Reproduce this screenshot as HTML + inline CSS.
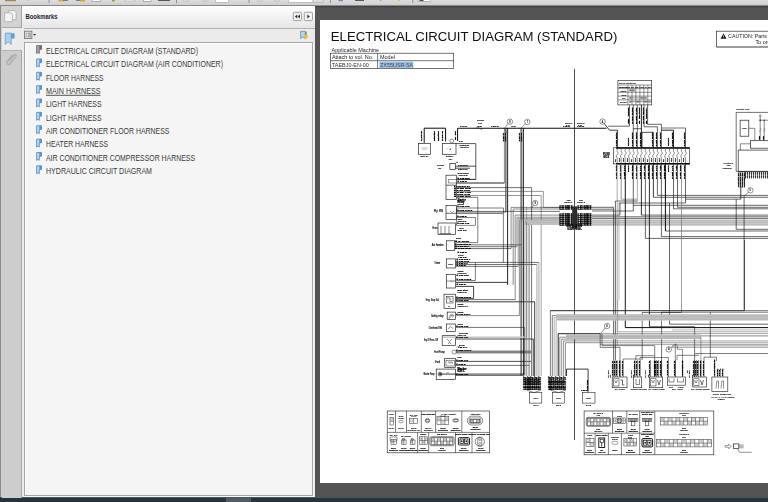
<!DOCTYPE html>
<html><head><meta charset="utf-8"><title>Electrical Circuit Diagram</title>
<style>
html,body{margin:0;padding:0;}
body{width:768px;height:502px;overflow:hidden;position:relative;background:#545454;font-family:"Liberation Sans",sans-serif;}
#tb{position:absolute;left:0;top:0;width:768px;height:5px;background:linear-gradient(#dcdcdc,#cfcfcf);border-bottom:1px solid #8a8a8a;}
#shade{position:absolute;left:315px;top:6px;width:453px;height:2px;background:linear-gradient(#3c3c3c,#545454);}
#strip{position:absolute;left:0;top:6px;width:22px;height:491px;background:#cdcdcd;border-left:1.3px solid #8c8c8c;box-sizing:border-box;}
#tab1{position:absolute;left:2px;top:6px;width:19px;height:21px;background:#d3d3d3;border-right:1px solid #a3a3a3;border-bottom:1px solid #a8a8a8;}
#tab2{position:absolute;left:2px;top:28px;width:22px;height:22px;background:#ebebeb;}
#tab3{position:absolute;left:2px;top:50px;width:19px;height:447px;background:#cdcdcd;border-right:1px solid #a6a6a6;border-top:1px solid #b3b3b3}
#panel{position:absolute;left:22px;top:6px;width:292.7px;height:491px;background:#ebebeb;}
#hdr{position:absolute;left:0;top:0;width:292.7px;height:21.6px;background:linear-gradient(#ffffff,#f6f6f6 40%,#e5e5e5);border-bottom:1px solid #b2b2b2;}
#list{position:absolute;left:2.2px;top:36.3px;width:287px;height:452px;background:#f5f5f5;border:1px solid #a5a5a5;box-shadow:inset 1px 1px 0 #fdfdfd, 1px 1px 0 #fafafa;}
#page{position:absolute;left:319.8px;top:20.3px;width:449px;height:463px;background:#fff;}
#bot{position:absolute;left:0;top:497.5px;width:768px;height:5px;background:#22353f;}
#bot i{position:absolute;left:226px;top:0.5px;width:25px;height:5px;background:#4a5e69;}
svg#dg{position:absolute;left:0;top:0;will-change:transform;}
</style></head><body>
<div id="tb"></div><div id="shade"></div>
<div id="strip"></div><div id="tab1"></div><div id="tab3"></div>
<div id="panel"><div id="hdr"></div><div id="list"></div></div><div id="tab2"></div>
<div id="page"></div>
<div id="bot"><i></i></div>
<svg width="768" height="502" style="position:absolute;left:0;top:0" font-family="Liberation Sans, sans-serif">
<!-- toolbar remnants -->
<rect x="5" y="0" width="11" height="1.2" fill="#a58645"/><rect x="27.5" y="0" width="1" height="0.8" fill="#8aa0c0"/>
<rect x="48.6" y="0" width="1" height="3" fill="#8f8f8f"/><rect x="176" y="0" width="1" height="3" fill="#8f8f8f"/><rect x="248.6" y="0" width="1" height="3" fill="#8f8f8f"/><rect x="330" y="0" width="1" height="3" fill="#8f8f8f"/><rect x="412.3" y="0" width="1" height="3" fill="#8f8f8f"/>
<rect x="58.5" y="0" width="6" height="1.4" fill="#dba436"/><rect x="63" y="0" width="5" height="1" fill="#7d7d7d"/>
<rect x="76" y="0" width="6" height="1" fill="#7d7d7d"/><rect x="80" y="0" width="5" height="1.5" fill="#dba436"/>
<rect x="92" y="-1" width="8.5" height="2.4" fill="#fff" stroke="#888" stroke-width="0.6"/>
<rect x="112" y="0" width="2.6" height="1.4" fill="#6ab132"/>
<rect x="125" y="-1" width="10" height="2" fill="#f6f6f6" stroke="#999" stroke-width="0.5"/><rect x="143.5" y="-1" width="7.5" height="2.4" fill="#fff" stroke="#888" stroke-width="0.6"/>
<rect x="158" y="0" width="12" height="1" fill="#555"/>
<circle cx="186" cy="-1.5" r="3.2" fill="none" stroke="#bbb" stroke-width="0.7"/><circle cx="205.5" cy="-1.5" r="3.2" fill="none" stroke="#bbb" stroke-width="0.7"/>
<rect x="215.5" y="-1" width="13" height="3.4" fill="#fff" stroke="#aaa" stroke-width="0.6"/>
<circle cx="260" cy="-1.5" r="3.2" fill="none" stroke="#bbb" stroke-width="0.7"/><circle cx="277" cy="-1.5" r="3.2" fill="none" stroke="#bbb" stroke-width="0.7"/>
<rect x="288.5" y="-1" width="24.5" height="3.4" fill="#fff" stroke="#aaa" stroke-width="0.6"/><rect x="313" y="-1" width="10.5" height="3.4" fill="#ddd" stroke="#aaa" stroke-width="0.6"/>
<rect x="338.5" y="0" width="4.5" height="1.2" fill="#6d8fc0"/><rect x="355" y="0" width="9" height="1" fill="#555"/>
<circle cx="380.5" cy="0" r="1" fill="#9a9a9a"/><circle cx="399" cy="0" r="1.1" fill="#d8c840"/>
<rect x="418" y="-1" width="12.5" height="2.6" fill="#fff" stroke="#888" stroke-width="0.6"/><rect x="419.5" y="0" width="4" height="1" fill="#444"/>
<!-- pages icon -->
<g fill="#f4f4f4" stroke="#a9a9a9" stroke-width="0.8"><path d="M8.3 10.6h6.2l1.6 1.6v7.4h-7.8z"/><path d="M4.6 12.8h6.3l1.5 1.5v7.4h-7.8z"/></g>
<!-- bookmark tab icon -->
<path d="M5.2 33.1h6v11.2l-3-2.5l-3 2.5z" fill="#a9d1ee" stroke="#6a9fcd" stroke-width="0.8"/><rect x="11.2" y="33.3" width="3.3" height="5.2" fill="#5d9bcf"/>
<!-- paperclip -->
<g transform="rotate(40 10.5 60)" fill="none" stroke="#adadad" stroke-width="1.3"><path d="M8.7 55v8.2a1.9 1.9 0 0 0 3.8 0v-9.4a1.2 1.2 0 0 0-2.4 0v8.6"/></g>
<!-- options icon -->
<rect x="24.4" y="31.2" width="7.5" height="7.4" fill="#ededed" stroke="#6d6d6d" stroke-width="0.8"/><path d="M25.6 33.2h1.2M27.6 33.2h3.4M25.6 35h1.2M27.6 35h3.4M25.6 36.8h1.2M27.6 36.8h3.4" stroke="#555" stroke-width="0.7"/><path d="M33 34h3.2l-1.6 1.7z" fill="#333"/>
<!-- new bookmark icon -->
<path d="M300.6 31.4h4.6v7.2l-2.3-1.6l-2.3 1.6z" fill="#b7d6ee" stroke="#5d8fc0" stroke-width="0.8"/><rect x="305" y="31.6" width="1.8" height="3.4" fill="#5d9bcf"/><circle cx="305.6" cy="36.6" r="2.2" fill="#f0b93a"/>
<!-- header buttons -->
<rect x="293.3" y="12.3" width="8.3" height="8.3" rx="1" fill="#f2f2f2" stroke="#8d8d8d" stroke-width="0.8"/><path d="M297.3 14.6v3.8l-2.4-1.9zM300 14.6v3.8l-2.4-1.9z" fill="#333"/>
<rect x="304.3" y="12.3" width="8.2" height="8.3" rx="1" fill="#f2f2f2" stroke="#8d8d8d" stroke-width="0.8"/><path d="M307.3 14.5v4l2.6-2z" fill="#333"/>
<text x="25.5" y="18.6" font-size="8" font-weight="bold" fill="#1b1f36" textLength="32" lengthAdjust="spacingAndGlyphs">Bookmarks</text>
<g transform="translate(36.1,45.10)"><path d="M0.5 0.5h4.9v3.7h-2.2v4.2l-1.3-1.1l-1.4 1.1z" fill="#a9a9a9" stroke="#6e6e6e" stroke-width="0.9"/><rect x="3.2" y="0.4" width="2.4" height="3.9" fill="#6e6e6e"/></g><text x="46" y="53.80" font-size="8.7" fill="#3a3a3a" textLength="152" lengthAdjust="spacingAndGlyphs">ELECTRICAL CIRCUIT DIAGRAM (STANDARD)</text>
<g transform="translate(36.1,58.46)"><path d="M0.5 0.5h4.9v3.7h-2.2v4.2l-1.3-1.1l-1.4 1.1z" fill="#bcd8ee" stroke="#5a92c6" stroke-width="0.9"/><rect x="3.2" y="0.4" width="2.4" height="3.9" fill="#5a92c6"/></g><text x="46" y="67.16" font-size="8.7" fill="#3a3a3a" textLength="177" lengthAdjust="spacingAndGlyphs">ELECTRICAL CIRCUIT DIAGRAM (AIR CONDITIONER)</text>
<g transform="translate(36.1,71.82)"><path d="M0.5 0.5h4.9v3.7h-2.2v4.2l-1.3-1.1l-1.4 1.1z" fill="#bcd8ee" stroke="#5a92c6" stroke-width="0.9"/><rect x="3.2" y="0.4" width="2.4" height="3.9" fill="#5a92c6"/></g><text x="46" y="80.52" font-size="8.7" fill="#3a3a3a" textLength="57.5" lengthAdjust="spacingAndGlyphs">FLOOR HARNESS</text>
<g transform="translate(36.1,85.18)"><path d="M0.5 0.5h4.9v3.7h-2.2v4.2l-1.3-1.1l-1.4 1.1z" fill="#bcd8ee" stroke="#5a92c6" stroke-width="0.9"/><rect x="3.2" y="0.4" width="2.4" height="3.9" fill="#5a92c6"/></g><text x="46" y="93.88" font-size="8.7" fill="#3a3a3a" textLength="54.5" lengthAdjust="spacingAndGlyphs">MAIN HARNESS</text><path d="M46 95.3H100.5" stroke="#2b2b2b" stroke-width="0.8"/>
<g transform="translate(36.1,98.54)"><path d="M0.5 0.5h4.9v3.7h-2.2v4.2l-1.3-1.1l-1.4 1.1z" fill="#bcd8ee" stroke="#5a92c6" stroke-width="0.9"/><rect x="3.2" y="0.4" width="2.4" height="3.9" fill="#5a92c6"/></g><text x="46" y="107.24" font-size="8.7" fill="#3a3a3a" textLength="55.5" lengthAdjust="spacingAndGlyphs">LIGHT HARNESS</text>
<g transform="translate(36.1,111.90)"><path d="M0.5 0.5h4.9v3.7h-2.2v4.2l-1.3-1.1l-1.4 1.1z" fill="#bcd8ee" stroke="#5a92c6" stroke-width="0.9"/><rect x="3.2" y="0.4" width="2.4" height="3.9" fill="#5a92c6"/></g><text x="46" y="120.60" font-size="8.7" fill="#3a3a3a" textLength="55.5" lengthAdjust="spacingAndGlyphs">LIGHT HARNESS</text>
<g transform="translate(36.1,125.26)"><path d="M0.5 0.5h4.9v3.7h-2.2v4.2l-1.3-1.1l-1.4 1.1z" fill="#bcd8ee" stroke="#5a92c6" stroke-width="0.9"/><rect x="3.2" y="0.4" width="2.4" height="3.9" fill="#5a92c6"/></g><text x="46" y="133.96" font-size="8.7" fill="#3a3a3a" textLength="123.5" lengthAdjust="spacingAndGlyphs">AIR CONDITIONER FLOOR HARNESS</text>
<g transform="translate(36.1,138.62)"><path d="M0.5 0.5h4.9v3.7h-2.2v4.2l-1.3-1.1l-1.4 1.1z" fill="#bcd8ee" stroke="#5a92c6" stroke-width="0.9"/><rect x="3.2" y="0.4" width="2.4" height="3.9" fill="#5a92c6"/></g><text x="46" y="147.32" font-size="8.7" fill="#3a3a3a" textLength="62" lengthAdjust="spacingAndGlyphs">HEATER HARNESS</text>
<g transform="translate(36.1,151.98)"><path d="M0.5 0.5h4.9v3.7h-2.2v4.2l-1.3-1.1l-1.4 1.1z" fill="#bcd8ee" stroke="#5a92c6" stroke-width="0.9"/><rect x="3.2" y="0.4" width="2.4" height="3.9" fill="#5a92c6"/></g><text x="46" y="160.68" font-size="8.7" fill="#3a3a3a" textLength="149" lengthAdjust="spacingAndGlyphs">AIR CONDITIONER COMPRESSOR HARNESS</text>
<g transform="translate(36.1,165.34)"><path d="M0.5 0.5h4.9v3.7h-2.2v4.2l-1.3-1.1l-1.4 1.1z" fill="#bcd8ee" stroke="#5a92c6" stroke-width="0.9"/><rect x="3.2" y="0.4" width="2.4" height="3.9" fill="#5a92c6"/></g><text x="46" y="174.04" font-size="8.7" fill="#3a3a3a" textLength="106" lengthAdjust="spacingAndGlyphs">HYDRAULIC CIRCUIT DIAGRAM</text>
</svg>
<svg id="dg" width="768" height="502" viewBox="0 0 768 502" font-family="Liberation Sans, sans-serif" fill="none">
<text x="330.8" y="41.3" font-size="12.85" fill="#111" textLength="286.5" lengthAdjust="spacingAndGlyphs">ELECTRICAL CIRCUIT DIAGRAM (STANDARD)</text>
<text x="331.5" y="51.9" font-size="5.9" fill="#2a2233" textLength="47.5" lengthAdjust="spacingAndGlyphs">Applicable Machine</text>
<rect x="330.4" y="53.2" width="123.3" height="15.3" stroke="#222" stroke-width="0.62" fill="none"/>
<path d="M330.4 60.7H453.7" stroke="#222" stroke-width="0.62"/>
<path d="M377.6 53.2V68.5" stroke="#222" stroke-width="0.62"/>
<text x="331.9" y="58.8" font-size="5.6" fill="#222" textLength="41.4" lengthAdjust="spacingAndGlyphs">Attach to vol. No.</text>
<text x="380.0" y="58.8" font-size="5.6" fill="#222" textLength="14.9" lengthAdjust="spacingAndGlyphs">Model</text>
<text x="331.9" y="66.7" font-size="5.6" fill="#333" textLength="36.8" lengthAdjust="spacingAndGlyphs">TAEBJ0-EN-00</text>
<rect x="379.4" y="61.4" width="34" height="6.6" fill="#9fc0e2"/>
<text x="380.0" y="66.7" font-size="5.6" fill="#3a4656" textLength="33" lengthAdjust="spacingAndGlyphs">ZX55USR-5A</text>
<rect x="717.2" y="32" width="60" height="15.6" fill="#9a9a9a"/>
<rect x="716.5" y="31.2" width="73.5" height="15.7" stroke="#333" stroke-width="0.72" fill="#fff"/>
<path d="M723.5 33.6L726.5 38.8H720.5Z" fill="#111"/>
<path d="M723.5 35.2V37.2M723.5 37.7V38.3" stroke="#fff" stroke-width="0.6"/>
<text x="728.1" y="37.9" font-size="6.2" fill="#222" textLength="38.9" lengthAdjust="spacingAndGlyphs">CAUTION: Parts</text>
<text x="755.4" y="44.1" font-size="6.2" fill="#222" textLength="19.9" lengthAdjust="spacingAndGlyphs">To order</text>
<path d="M458.0 128.2H606.5" stroke="#0a0a0a" stroke-width="1.1"/>
<path d="M424.2 142.8L424.2 128.2L445.6 128.2L445.6 141.5" stroke="#0a0a0a" stroke-width="1.0" fill="none"/>
<path d="M457.6 128.2V141.0" stroke="#0a0a0a" stroke-width="1.0"/>
<rect x="418.4" y="143.5" width="11.9" height="10.8" stroke="#1c1c1c" stroke-width="0.67" fill="none"/>
<rect x="442.3" y="143.5" width="13.7" height="10.8" stroke="#1c1c1c" stroke-width="0.67" fill="none"/>
<circle cx="451.8" cy="141.0" r="1.9" stroke="#262626" stroke-width="0.5" fill="none"/>
<path d="M456.0 143.6L475.8 143.6L475.8 179.4" stroke="#0a0a0a" stroke-width="0.67" fill="none"/>
<path d="M456.5 179.4H475.8" stroke="#0a0a0a" stroke-width="0.9"/>
<rect x="449.8" y="163.5" width="5.5" height="5.9" stroke="#1c1c1c" stroke-width="0.67" fill="none"/>
<path d="M455.3 166.2H475.8" stroke="#0a0a0a" stroke-width="0.72"/>
<path d="M455.3 168.2H470.0" stroke="#0a0a0a" stroke-width="0.72"/>
<path d="M421.0 148.0H428.0" stroke="#8c8c8c" stroke-width="0.47000000000000003"/>
<path d="M422.5 149.3H426.5" stroke="#8c8c8c" stroke-width="0.47000000000000003"/>
<text x="446.5" y="149.5" font-size="3.2" fill="#333" stroke="#333" stroke-width="0.14">−  +</text>
<text x="420.5" y="157.3" font-size="2.3" fill="#222" stroke="#222" stroke-width="0.14">Batt. Ry</text>
<text x="446.0" y="157.3" font-size="2.3" fill="#222" stroke="#222" stroke-width="0.14">Battery</text>
<text x="448.5" y="159.8" font-size="2.3" fill="#222" stroke="#222" stroke-width="0.14">12V</text>
<text x="437.0" y="166.3" font-size="2.2" fill="#222" stroke="#222" stroke-width="0.14">Fusible</text>
<text x="438.0" y="168.6" font-size="2.2" fill="#222" stroke="#222" stroke-width="0.14">link</text>
<text x="422.4" y="141.0" font-size="2.1" fill="#000" stroke="#000" stroke-width="0.22" font-weight="bold" transform="rotate(-90 422.4 141.0)" textLength="10" lengthAdjust="spacingAndGlyphs">1.25 B</text>
<text x="435.2" y="141.0" font-size="2.1" fill="#000" stroke="#000" stroke-width="0.22" font-weight="bold" transform="rotate(-90 435.2 141.0)" textLength="10" lengthAdjust="spacingAndGlyphs">Starter</text>
<text x="439.2" y="141.0" font-size="2.1" fill="#000" stroke="#000" stroke-width="0.22" font-weight="bold" transform="rotate(-90 439.2 141.0)" textLength="10" lengthAdjust="spacingAndGlyphs">Motor</text>
<text x="443.4" y="141.0" font-size="2.1" fill="#000" stroke="#000" stroke-width="0.22" font-weight="bold" transform="rotate(-90 443.4 141.0)" textLength="10" lengthAdjust="spacingAndGlyphs">1.25 R</text>
<text x="455.9" y="140.0" font-size="2.1" fill="#000" stroke="#000" stroke-width="0.22" font-weight="bold" transform="rotate(-90 455.9 140.0)" textLength="9" lengthAdjust="spacingAndGlyphs">5 R</text>
<text x="460.0" y="127.2" font-size="2.5" fill="#222" stroke="#222" stroke-width="0.22" font-weight="bold">5 W/R</text>
<text x="477.5" y="127.2" font-size="2.5" fill="#222" stroke="#222" stroke-width="0.22" font-weight="bold">5 W</text>
<text x="491.0" y="127.2" font-size="2.5" fill="#222" stroke="#222" stroke-width="0.22" font-weight="bold">1.25 W</text>
<text x="511.5" y="127.2" font-size="2.5" fill="#222" stroke="#222" stroke-width="0.22" font-weight="bold">5 W</text>
<text x="477.0" y="121.2" font-size="2.2" fill="#222" stroke="#222" stroke-width="0.14">Fusible</text>
<text x="478.0" y="123.5" font-size="2.2" fill="#222" stroke="#222" stroke-width="0.14">Link</text>
<path d="M476.0 128.2L478.0 126.6L481.0 129.6L483.0 128.2" stroke="#0a0a0a" stroke-width="0.5" fill="none"/>
<text x="459.0" y="142.3" font-size="2.4" fill="#222" stroke="#222" stroke-width="0.22" font-weight="bold">5 R</text>
<text x="459.5" y="145.8" font-size="2.3" fill="#222" stroke="#222" stroke-width="0.22" font-weight="bold">1.25 B/W</text>
<text x="459.5" y="147.8" font-size="2.2" fill="#222" stroke="#222" stroke-width="0.14">Alternator</text>
<text x="458.0" y="166.0" font-size="2.3" fill="#222" stroke="#222" stroke-width="0.22" font-weight="bold">1.25 W/R</text>
<text x="458.0" y="169.9" font-size="2.3" fill="#222" stroke="#222" stroke-width="0.22" font-weight="bold">0.85 L/W</text>
<text x="456.5" y="163.0" font-size="2.2" fill="#222" stroke="#222" stroke-width="0.14">■</text>
<circle cx="510.0" cy="121.7" r="2.7" stroke="#262626" stroke-width="0.5" fill="#fff"/>
<text x="510.0" y="122.7" font-size="2.8" fill="#222" stroke="#222" stroke-width="0.14" text-anchor="middle">8</text>
<circle cx="527.3" cy="122.0" r="2.7" stroke="#262626" stroke-width="0.5" fill="#fff"/>
<text x="527.3" y="123.0" font-size="2.8" fill="#222" stroke="#222" stroke-width="0.14" text-anchor="middle">7</text>
<path d="M508.0 123.6L504.6 128.2" stroke="#262626" stroke-width="0.5" fill="none"/>
<path d="M525.3 123.9L521.0 128.2" stroke="#262626" stroke-width="0.5" fill="none"/>
<path d="M504.4 128.2V182.8" stroke="#1c1c1c" stroke-width="0.52"/>
<path d="M505.9 128.2V212.0" stroke="#0a0a0a" stroke-width="0.85"/>
<path d="M507.6 128.2V285.0" stroke="#0a0a0a" stroke-width="0.9"/>
<path d="M503.8 128.2L507.4 133.2" stroke="#262626" stroke-width="0.4" fill="none"/>
<path d="M521.1 128.2V375.5" stroke="#0a0a0a" stroke-width="0.9"/>
<path d="M522.3 128.2V300.0" stroke="#888" stroke-width="0.47000000000000003"/>
<path d="M523.4 128.2V375.5" stroke="#0a0a0a" stroke-width="0.9"/>
<text x="503.8" y="141.5" font-size="2.1" fill="#000" stroke="#000" stroke-width="0.22" font-weight="bold" transform="rotate(-90 503.8 141.5)" textLength="8.5" lengthAdjust="spacingAndGlyphs">1.25 W</text>
<text x="505.9" y="141.5" font-size="2.1" fill="#000" stroke="#000" stroke-width="0.22" font-weight="bold" transform="rotate(-90 505.9 141.5)" textLength="8.5" lengthAdjust="spacingAndGlyphs">1.25 W</text>
<text x="520.1" y="141.5" font-size="2.1" fill="#000" stroke="#000" stroke-width="0.22" font-weight="bold" transform="rotate(-90 520.1 141.5)" textLength="8.5" lengthAdjust="spacingAndGlyphs">1.25 W</text>
<text x="522.4" y="141.5" font-size="2.1" fill="#000" stroke="#000" stroke-width="0.22" font-weight="bold" transform="rotate(-90 522.4 141.5)" textLength="8.5" lengthAdjust="spacingAndGlyphs">1.25 W</text>
<path d="M574.5 68.7V440.0" stroke="#0a0a0a" stroke-width="0.72"/>
<text x="565.0" y="123.5" font-size="2.2" fill="#222" stroke="#222" stroke-width="0.14">Relay-1</text>
<text x="566.0" y="125.8" font-size="2.2" fill="#222" stroke="#222" stroke-width="0.14">5 W</text>
<text x="577.0" y="123.5" font-size="2.2" fill="#222" stroke="#222" stroke-width="0.14">Relay-2</text>
<text x="578.0" y="125.8" font-size="2.2" fill="#222" stroke="#222" stroke-width="0.14">5 W</text>
<text x="563.0" y="127.3" font-size="2.3" fill="#222" stroke="#222" stroke-width="0.22" font-weight="bold">1.25 W</text>
<text x="577.0" y="127.3" font-size="2.3" fill="#222" stroke="#222" stroke-width="0.22" font-weight="bold">1.25 W</text>
<rect x="617.9" y="80.4" width="33.8" height="24.5" stroke="#1c1c1c" stroke-width="0.62" fill="#fff"/>
<path d="M617.9 85.0H651.7" stroke="#1c1c1c" stroke-width="0.47000000000000003"/>
<path d="M617.9 88.6H651.7" stroke="#1c1c1c" stroke-width="0.47000000000000003"/>
<path d="M617.9 92.3H651.7" stroke="#1c1c1c" stroke-width="0.47000000000000003"/>
<path d="M617.9 96.1H651.7" stroke="#1c1c1c" stroke-width="0.47000000000000003"/>
<path d="M617.9 99.9H651.7" stroke="#1c1c1c" stroke-width="0.47000000000000003"/>
<path d="M627.9 85.0V104.9" stroke="#1c1c1c" stroke-width="0.47000000000000003"/>
<path d="M632.0 85.0V104.9" stroke="#1c1c1c" stroke-width="0.47000000000000003"/>
<path d="M635.9 85.0V104.9" stroke="#1c1c1c" stroke-width="0.47000000000000003"/>
<path d="M639.9 85.0V104.9" stroke="#1c1c1c" stroke-width="0.47000000000000003"/>
<path d="M643.9 85.0V104.9" stroke="#1c1c1c" stroke-width="0.47000000000000003"/>
<path d="M647.8 85.0V104.9" stroke="#1c1c1c" stroke-width="0.47000000000000003"/>
<text x="619.0" y="84.0" font-size="2.3" fill="#222" stroke="#222" stroke-width="0.14" textLength="17" lengthAdjust="spacingAndGlyphs">Key SW (Starter SW)</text>
<text x="618.6" y="88.0" font-size="2.3" fill="#222" stroke="#222" stroke-width="0.22" font-weight="bold">Terminal</text>
<text x="628.3" y="88.0" font-size="2.2" fill="#222" stroke="#222" stroke-width="0.14" textLength="23" lengthAdjust="spacingAndGlyphs">B G1 G2 ACC M ST</text>
<text x="620.5" y="91.7" font-size="2.3" fill="#222" stroke="#222" stroke-width="0.14">HEAT</text>
<text x="621.5" y="95.5" font-size="2.3" fill="#222" stroke="#222" stroke-width="0.14">OFF</text>
<text x="622.0" y="99.3" font-size="2.3" fill="#222" stroke="#222" stroke-width="0.14">ON</text>
<text x="619.8" y="103.2" font-size="2.3" fill="#222" stroke="#222" stroke-width="0.14">START</text>
<circle cx="630.0" cy="90.4" r="0.9" stroke="#262626" stroke-width="0.4" fill="none"/>
<circle cx="634.0" cy="90.4" r="0.9" stroke="#262626" stroke-width="0.4" fill="none"/>
<path d="M630.0 90.4H634.0" stroke="#1c1c1c" stroke-width="0.47000000000000003"/>
<circle cx="630.0" cy="97.9" r="0.9" stroke="#262626" stroke-width="0.4" fill="none"/>
<circle cx="641.9" cy="97.9" r="0.9" stroke="#262626" stroke-width="0.4" fill="none"/>
<circle cx="645.8" cy="97.9" r="0.9" stroke="#262626" stroke-width="0.4" fill="none"/>
<path d="M630.0 97.9H645.8" stroke="#1c1c1c" stroke-width="0.47000000000000003"/>
<circle cx="630.0" cy="101.7" r="0.9" stroke="#262626" stroke-width="0.4" fill="none"/>
<circle cx="637.9" cy="101.7" r="0.9" stroke="#262626" stroke-width="0.4" fill="none"/>
<circle cx="645.8" cy="101.7" r="0.9" stroke="#262626" stroke-width="0.4" fill="none"/>
<circle cx="649.8" cy="101.7" r="0.9" stroke="#262626" stroke-width="0.4" fill="none"/>
<path d="M630.0 101.7H649.8" stroke="#1c1c1c" stroke-width="0.47000000000000003"/>
<circle cx="602.5" cy="121.5" r="2.7" stroke="#262626" stroke-width="0.5" fill="#fff"/>
<text x="602.5" y="122.5" font-size="2.8" fill="#222" stroke="#222" stroke-width="0.14" text-anchor="middle">4</text>
<path d="M604.3 123.6L609.5 130.2L617.4 130.2L617.4 147.8" stroke="#0a0a0a" stroke-width="0.8" fill="none"/>
<path d="M629.5 104.9L629.5 126.2L608.2 126.2" stroke="#0a0a0a" stroke-width="0.62" fill="none"/>
<path d="M633.3 104.9L633.3 147.8" stroke="#0a0a0a" stroke-width="0.62" fill="none"/>
<path d="M637.3 104.9L637.3 147.8" stroke="#0a0a0a" stroke-width="0.62" fill="none"/>
<path d="M641.4 104.9V147.8" stroke="#0a0a0a" stroke-width="0.9"/>
<path d="M644.0 104.9L644.0 126.8L657.4 126.8L657.4 147.8" stroke="#0a0a0a" stroke-width="0.62" fill="none"/>
<path d="M647.6 104.9L647.6 124.3L661.4 124.3L661.4 147.8" stroke="#0a0a0a" stroke-width="0.62" fill="none"/>
<path d="M633.2 128.7L641.4 128.7" stroke="#0a0a0a" stroke-width="0.62" fill="none"/>
<path d="M642.0 147.8L642.0 132.3L653.4 132.3L653.4 147.8" stroke="#0a0a0a" stroke-width="0.72" fill="none"/>
<path d="M661.4 128.0L685.5 128.0" stroke="#1c1c1c" stroke-width="0.62" fill="none"/>
<path d="M661.4 130.2L673.5 130.2L673.5 147.8" stroke="#0a0a0a" stroke-width="0.9" fill="none"/>
<path d="M685.5 128.0L685.5 147.8" stroke="#0a0a0a" stroke-width="0.62" fill="none"/>
<text x="629.2" y="124.0" font-size="2.1" fill="#000" stroke="#000" stroke-width="0.22" font-weight="bold" transform="rotate(-90 629.2 124.0)" textLength="16.5" lengthAdjust="spacingAndGlyphs">3 W</text>
<text x="633.0" y="124.0" font-size="2.1" fill="#000" stroke="#000" stroke-width="0.22" font-weight="bold" transform="rotate(-90 633.0 124.0)" textLength="16.5" lengthAdjust="spacingAndGlyphs">1.25 R/W</text>
<text x="636.6" y="124.0" font-size="2.1" fill="#000" stroke="#000" stroke-width="0.22" font-weight="bold" transform="rotate(-90 636.6 124.0)" textLength="16.5" lengthAdjust="spacingAndGlyphs">0.85 L/R</text>
<text x="640.0" y="124.0" font-size="2.1" fill="#000" stroke="#000" stroke-width="0.22" font-weight="bold" transform="rotate(-90 640.0 124.0)" textLength="16.5" lengthAdjust="spacingAndGlyphs">3 B/W</text>
<text x="643.6" y="124.0" font-size="2.1" fill="#000" stroke="#000" stroke-width="0.22" font-weight="bold" transform="rotate(-90 643.6 124.0)" textLength="16.5" lengthAdjust="spacingAndGlyphs">1.25 B/R</text>
<text x="647.2" y="124.0" font-size="2.1" fill="#000" stroke="#000" stroke-width="0.22" font-weight="bold" transform="rotate(-90 647.2 124.0)" textLength="16.5" lengthAdjust="spacingAndGlyphs">2 W/L</text>
<text x="616.6" y="146.5" font-size="2.1" fill="#000" stroke="#000" stroke-width="0.22" font-weight="bold" transform="rotate(-90 616.6 146.5)" textLength="14.0" lengthAdjust="spacingAndGlyphs">1.25 R/W</text>
<text x="632.6" y="146.5" font-size="2.1" fill="#000" stroke="#000" stroke-width="0.22" font-weight="bold" transform="rotate(-90 632.6 146.5)" textLength="14.0" lengthAdjust="spacingAndGlyphs">1.25 R/W</text>
<text x="636.6" y="146.5" font-size="2.1" fill="#000" stroke="#000" stroke-width="0.22" font-weight="bold" transform="rotate(-90 636.6 146.5)" textLength="14.0" lengthAdjust="spacingAndGlyphs">1.25 R/W</text>
<text x="640.8" y="146.5" font-size="2.1" fill="#000" stroke="#000" stroke-width="0.22" font-weight="bold" transform="rotate(-90 640.8 146.5)" textLength="14.0" lengthAdjust="spacingAndGlyphs">1.25 R/W</text>
<text x="652.8" y="146.5" font-size="2.1" fill="#000" stroke="#000" stroke-width="0.22" font-weight="bold" transform="rotate(-90 652.8 146.5)" textLength="14.0" lengthAdjust="spacingAndGlyphs">1.25 R/W</text>
<text x="656.8" y="146.5" font-size="2.1" fill="#000" stroke="#000" stroke-width="0.22" font-weight="bold" transform="rotate(-90 656.8 146.5)" textLength="14.0" lengthAdjust="spacingAndGlyphs">1.25 R/W</text>
<text x="660.8" y="146.5" font-size="2.1" fill="#000" stroke="#000" stroke-width="0.22" font-weight="bold" transform="rotate(-90 660.8 146.5)" textLength="14.0" lengthAdjust="spacingAndGlyphs">1.25 R/W</text>
<text x="672.9" y="146.5" font-size="2.1" fill="#000" stroke="#000" stroke-width="0.22" font-weight="bold" transform="rotate(-90 672.9 146.5)" textLength="14.0" lengthAdjust="spacingAndGlyphs">1.25 R/W</text>
<text x="684.9" y="146.5" font-size="2.1" fill="#000" stroke="#000" stroke-width="0.22" font-weight="bold" transform="rotate(-90 684.9 146.5)" textLength="14.0" lengthAdjust="spacingAndGlyphs">1.25 R/W</text>
<text x="628.8" y="146.0" font-size="2.1" fill="#000" stroke="#000" stroke-width="0.22" font-weight="bold" transform="rotate(-90 628.8 146.0)" textLength="8" lengthAdjust="spacingAndGlyphs">Spare</text>
<text x="669.0" y="146.0" font-size="2.1" fill="#000" stroke="#000" stroke-width="0.22" font-weight="bold" transform="rotate(-90 669.0 146.0)" textLength="8" lengthAdjust="spacingAndGlyphs">Spare</text>
<rect x="613.6" y="147.8" width="76.1" height="16.1" stroke="#1c1c1c" stroke-width="0.62" fill="none"/>
<path d="M616.0 147.9H689.5" stroke="#0a0a0a" stroke-width="1.5"/>
<path d="M616.0 163.8H689.5" stroke="#0a0a0a" stroke-width="1.5"/>
<text x="603.0" y="155.3" font-size="2.6" fill="#222" stroke="#222" stroke-width="0.22" font-weight="bold">FUSE</text>
<text x="603.5" y="158.0" font-size="2.6" fill="#222" stroke="#222" stroke-width="0.22" font-weight="bold">BOX</text>
<path d="M617.2 149.0L617.2 151.5L618.3 153.0L616.3 156.0L617.2 158.0L617.2 163.0" stroke="#262626" stroke-width="0.5" fill="none"/>
<text x="615.9" y="161.8" font-size="2.0" fill="#222" stroke="#222" stroke-width="0.22" font-weight="bold" transform="rotate(-90 615.9 161.8)">5A</text>
<path d="M621.2 149.0L621.2 151.5L622.3 153.0L620.3 156.0L621.2 158.0L621.2 163.0" stroke="#262626" stroke-width="0.5" fill="none"/>
<text x="619.9" y="161.8" font-size="2.0" fill="#222" stroke="#222" stroke-width="0.22" font-weight="bold" transform="rotate(-90 619.9 161.8)">10A</text>
<path d="M625.2 149.0L625.2 151.5L626.3 153.0L624.3 156.0L625.2 158.0L625.2 163.0" stroke="#262626" stroke-width="0.5" fill="none"/>
<text x="623.9" y="161.8" font-size="2.0" fill="#222" stroke="#222" stroke-width="0.22" font-weight="bold" transform="rotate(-90 623.9 161.8)">15A</text>
<path d="M629.3 149.0L629.3 151.5L630.4 153.0L628.4 156.0L629.3 158.0L629.3 163.0" stroke="#262626" stroke-width="0.5" fill="none"/>
<text x="628.0" y="161.8" font-size="2.0" fill="#222" stroke="#222" stroke-width="0.22" font-weight="bold" transform="rotate(-90 628.0 161.8)">20A</text>
<path d="M633.3 149.0L633.3 151.5L634.4 153.0L632.4 156.0L633.3 158.0L633.3 163.0" stroke="#262626" stroke-width="0.5" fill="none"/>
<text x="632.0" y="161.8" font-size="2.0" fill="#222" stroke="#222" stroke-width="0.22" font-weight="bold" transform="rotate(-90 632.0 161.8)">5A</text>
<path d="M637.3 149.0L637.3 151.5L638.4 153.0L636.4 156.0L637.3 158.0L637.3 163.0" stroke="#262626" stroke-width="0.5" fill="none"/>
<text x="636.0" y="161.8" font-size="2.0" fill="#222" stroke="#222" stroke-width="0.22" font-weight="bold" transform="rotate(-90 636.0 161.8)">10A</text>
<path d="M641.3 149.0L641.3 151.5L642.4 153.0L640.4 156.0L641.3 158.0L641.3 163.0" stroke="#262626" stroke-width="0.5" fill="none"/>
<text x="640.0" y="161.8" font-size="2.0" fill="#222" stroke="#222" stroke-width="0.22" font-weight="bold" transform="rotate(-90 640.0 161.8)">15A</text>
<path d="M645.3 149.0L645.3 151.5L646.4 153.0L644.4 156.0L645.3 158.0L645.3 163.0" stroke="#262626" stroke-width="0.5" fill="none"/>
<text x="644.0" y="161.8" font-size="2.0" fill="#222" stroke="#222" stroke-width="0.22" font-weight="bold" transform="rotate(-90 644.0 161.8)">20A</text>
<path d="M649.4 149.0L649.4 151.5L650.5 153.0L648.5 156.0L649.4 158.0L649.4 163.0" stroke="#262626" stroke-width="0.5" fill="none"/>
<text x="648.1" y="161.8" font-size="2.0" fill="#222" stroke="#222" stroke-width="0.22" font-weight="bold" transform="rotate(-90 648.1 161.8)">5A</text>
<path d="M653.4 149.0L653.4 151.5L654.5 153.0L652.5 156.0L653.4 158.0L653.4 163.0" stroke="#262626" stroke-width="0.5" fill="none"/>
<text x="652.1" y="161.8" font-size="2.0" fill="#222" stroke="#222" stroke-width="0.22" font-weight="bold" transform="rotate(-90 652.1 161.8)">10A</text>
<path d="M657.4 149.0L657.4 151.5L658.5 153.0L656.5 156.0L657.4 158.0L657.4 163.0" stroke="#262626" stroke-width="0.5" fill="none"/>
<text x="656.1" y="161.8" font-size="2.0" fill="#222" stroke="#222" stroke-width="0.22" font-weight="bold" transform="rotate(-90 656.1 161.8)">15A</text>
<path d="M661.4 149.0L661.4 151.5L662.5 153.0L660.5 156.0L661.4 158.0L661.4 163.0" stroke="#262626" stroke-width="0.5" fill="none"/>
<text x="660.1" y="161.8" font-size="2.0" fill="#222" stroke="#222" stroke-width="0.22" font-weight="bold" transform="rotate(-90 660.1 161.8)">20A</text>
<path d="M665.4 149.0L665.4 151.5L666.5 153.0L664.5 156.0L665.4 158.0L665.4 163.0" stroke="#262626" stroke-width="0.5" fill="none"/>
<text x="664.1" y="161.8" font-size="2.0" fill="#222" stroke="#222" stroke-width="0.22" font-weight="bold" transform="rotate(-90 664.1 161.8)">5A</text>
<path d="M669.5 149.0L669.5 151.5L670.6 153.0L668.6 156.0L669.5 158.0L669.5 163.0" stroke="#262626" stroke-width="0.5" fill="none"/>
<text x="668.2" y="161.8" font-size="2.0" fill="#222" stroke="#222" stroke-width="0.22" font-weight="bold" transform="rotate(-90 668.2 161.8)">10A</text>
<path d="M673.5 149.0L673.5 151.5L674.6 153.0L672.6 156.0L673.5 158.0L673.5 163.0" stroke="#262626" stroke-width="0.5" fill="none"/>
<text x="672.2" y="161.8" font-size="2.0" fill="#222" stroke="#222" stroke-width="0.22" font-weight="bold" transform="rotate(-90 672.2 161.8)">15A</text>
<path d="M677.5 149.0L677.5 151.5L678.6 153.0L676.6 156.0L677.5 158.0L677.5 163.0" stroke="#262626" stroke-width="0.5" fill="none"/>
<text x="676.2" y="161.8" font-size="2.0" fill="#222" stroke="#222" stroke-width="0.22" font-weight="bold" transform="rotate(-90 676.2 161.8)">20A</text>
<path d="M681.5 149.0L681.5 151.5L682.6 153.0L680.6 156.0L681.5 158.0L681.5 163.0" stroke="#262626" stroke-width="0.5" fill="none"/>
<text x="680.2" y="161.8" font-size="2.0" fill="#222" stroke="#222" stroke-width="0.22" font-weight="bold" transform="rotate(-90 680.2 161.8)">5A</text>
<path d="M685.5 149.0L685.5 151.5L686.6 153.0L684.6 156.0L685.5 158.0L685.5 163.0" stroke="#262626" stroke-width="0.5" fill="none"/>
<text x="684.2" y="161.8" font-size="2.0" fill="#222" stroke="#222" stroke-width="0.22" font-weight="bold" transform="rotate(-90 684.2 161.8)">10A</text>
<text x="616.5" y="179.0" font-size="2.1" fill="#000" stroke="#000" stroke-width="0.22" font-weight="bold" transform="rotate(-90 616.5 179.0)" textLength="13.7" lengthAdjust="spacingAndGlyphs">0.85 R/B</text>
<text x="620.5" y="179.0" font-size="2.1" fill="#000" stroke="#000" stroke-width="0.22" font-weight="bold" transform="rotate(-90 620.5 179.0)" textLength="13.7" lengthAdjust="spacingAndGlyphs">0.85 G/W</text>
<text x="624.5" y="179.0" font-size="2.1" fill="#000" stroke="#000" stroke-width="0.22" font-weight="bold" transform="rotate(-90 624.5 179.0)" textLength="13.7" lengthAdjust="spacingAndGlyphs">1.25 L/Y</text>
<text x="628.5" y="172.0" font-size="2.1" fill="#000" stroke="#000" stroke-width="0.22" font-weight="bold" transform="rotate(-90 628.5 172.0)" textLength="6.7" lengthAdjust="spacingAndGlyphs">Spare</text>
<text x="632.5" y="179.0" font-size="2.1" fill="#000" stroke="#000" stroke-width="0.22" font-weight="bold" transform="rotate(-90 632.5 179.0)" textLength="13.7" lengthAdjust="spacingAndGlyphs">0.85 R/B</text>
<text x="636.6" y="179.0" font-size="2.1" fill="#000" stroke="#000" stroke-width="0.22" font-weight="bold" transform="rotate(-90 636.6 179.0)" textLength="13.7" lengthAdjust="spacingAndGlyphs">0.85 G/W</text>
<text x="640.6" y="179.0" font-size="2.1" fill="#000" stroke="#000" stroke-width="0.22" font-weight="bold" transform="rotate(-90 640.6 179.0)" textLength="13.7" lengthAdjust="spacingAndGlyphs">1.25 L/Y</text>
<text x="644.6" y="179.0" font-size="2.1" fill="#000" stroke="#000" stroke-width="0.22" font-weight="bold" transform="rotate(-90 644.6 179.0)" textLength="13.7" lengthAdjust="spacingAndGlyphs">0.85 Y/R</text>
<text x="648.6" y="179.0" font-size="2.1" fill="#000" stroke="#000" stroke-width="0.22" font-weight="bold" transform="rotate(-90 648.6 179.0)" textLength="13.7" lengthAdjust="spacingAndGlyphs">0.85 R/B</text>
<text x="652.6" y="179.0" font-size="2.1" fill="#000" stroke="#000" stroke-width="0.22" font-weight="bold" transform="rotate(-90 652.6 179.0)" textLength="13.7" lengthAdjust="spacingAndGlyphs">0.85 G/W</text>
<text x="656.7" y="179.0" font-size="2.1" fill="#000" stroke="#000" stroke-width="0.22" font-weight="bold" transform="rotate(-90 656.7 179.0)" textLength="13.7" lengthAdjust="spacingAndGlyphs">1.25 L/Y</text>
<text x="660.7" y="179.0" font-size="2.1" fill="#000" stroke="#000" stroke-width="0.22" font-weight="bold" transform="rotate(-90 660.7 179.0)" textLength="13.7" lengthAdjust="spacingAndGlyphs">0.85 Y/R</text>
<text x="664.7" y="179.0" font-size="2.1" fill="#000" stroke="#000" stroke-width="0.22" font-weight="bold" transform="rotate(-90 664.7 179.0)" textLength="13.7" lengthAdjust="spacingAndGlyphs">0.85 R/B</text>
<text x="668.7" y="172.0" font-size="2.1" fill="#000" stroke="#000" stroke-width="0.22" font-weight="bold" transform="rotate(-90 668.7 172.0)" textLength="6.7" lengthAdjust="spacingAndGlyphs">Spare</text>
<text x="672.7" y="179.0" font-size="2.1" fill="#000" stroke="#000" stroke-width="0.22" font-weight="bold" transform="rotate(-90 672.7 179.0)" textLength="13.7" lengthAdjust="spacingAndGlyphs">1.25 L/Y</text>
<text x="676.8" y="179.0" font-size="2.1" fill="#000" stroke="#000" stroke-width="0.22" font-weight="bold" transform="rotate(-90 676.8 179.0)" textLength="13.7" lengthAdjust="spacingAndGlyphs">0.85 Y/R</text>
<text x="680.8" y="179.0" font-size="2.1" fill="#000" stroke="#000" stroke-width="0.22" font-weight="bold" transform="rotate(-90 680.8 179.0)" textLength="13.7" lengthAdjust="spacingAndGlyphs">0.85 R/B</text>
<text x="684.8" y="179.0" font-size="2.1" fill="#000" stroke="#000" stroke-width="0.22" font-weight="bold" transform="rotate(-90 684.8 179.0)" textLength="13.7" lengthAdjust="spacingAndGlyphs">0.85 G/W</text>
<text x="736.3" y="110.3" font-size="2.4" fill="#222" stroke="#222" stroke-width="0.14">Monitor Unit</text>
<path d="M790.0 112.4L736.2 112.4L736.2 171.4L790.0 171.4" stroke="#1c1c1c" stroke-width="0.62" fill="none"/>
<rect x="740.1" y="120.2" width="8.7" height="16.0" stroke="#1c1c1c" stroke-width="0.67" fill="none"/>
<text x="742.0" y="129.2" font-size="2.4" fill="#222" stroke="#222" stroke-width="0.14">LCD</text>
<path d="M748.8 128.3L754.8 128.3L754.8 140.7" stroke="#1c1c1c" stroke-width="0.52" fill="none"/>
<rect x="750.4" y="140.7" width="39.6" height="7.5" stroke="#1c1c1c" stroke-width="0.67" fill="none"/>
<path d="M750.4 143.8L740.4 143.8L740.4 150.1" stroke="#1c1c1c" stroke-width="0.52" fill="none"/>
<rect x="738.2" y="150.1" width="51.8" height="21.3" stroke="#1c1c1c" stroke-width="0.67" fill="none"/>
<path d="M760.2 116.0V140.7" stroke="#1c1c1c" stroke-width="0.52"/>
<path d="M764.2 120.2V140.7" stroke="#1c1c1c" stroke-width="0.52"/>
<path d="M759.0 120.2H768.0" stroke="#1c1c1c" stroke-width="0.52"/>
<path d="M758.8 116.0L761.6 116.0" stroke="#1c1c1c" stroke-width="0.52" fill="none"/>
<path d="M759.4 114.8L761.0 114.8" stroke="#1c1c1c" stroke-width="0.47000000000000003" fill="none"/>
<text x="760.0" y="140.0" font-size="2.1" fill="#000" stroke="#000" stroke-width="0.22" font-weight="bold" transform="rotate(-90 760.0 140.0)" textLength="4" lengthAdjust="spacingAndGlyphs">G</text>
<path d="M760.2 128.0L761.0 129.5L759.6 131.0L760.2 132.5" stroke="#444" stroke-width="0.4" fill="none"/>
<circle cx="760.2" cy="120.2" r="0.45" stroke="#0a0a0a" stroke-width="0.3" fill="#111"/>
<text x="764.0" y="140.0" font-size="2.1" fill="#000" stroke="#000" stroke-width="0.22" font-weight="bold" transform="rotate(-90 764.0 140.0)" textLength="4" lengthAdjust="spacingAndGlyphs">G</text>
<path d="M764.2 128.0L765.0 129.5L763.6 131.0L764.2 132.5" stroke="#444" stroke-width="0.4" fill="none"/>
<circle cx="764.2" cy="120.2" r="0.45" stroke="#0a0a0a" stroke-width="0.3" fill="#111"/>
<text x="723.6" y="164.2" font-size="2.3" fill="#222" stroke="#222" stroke-width="0.14">Monitor-1</text>
<text x="726.5" y="166.4" font-size="2.3" fill="#222" stroke="#222" stroke-width="0.14">16P</text>
<text x="722.5" y="168.6" font-size="2.3" fill="#222" stroke="#222" stroke-width="0.14">(Female)</text>
<text x="746.2" y="178.3" font-size="2.1" fill="#000" stroke="#000" stroke-width="0.22" font-weight="bold" transform="rotate(-90 746.2 178.3)" textLength="6.0" lengthAdjust="spacingAndGlyphs">0.5 G/R</text>
<text x="748.2" y="178.3" font-size="2.1" fill="#000" stroke="#000" stroke-width="0.22" font-weight="bold" transform="rotate(-90 748.2 178.3)" textLength="6.0" lengthAdjust="spacingAndGlyphs">0.5 G/R</text>
<text x="750.1" y="178.3" font-size="2.1" fill="#000" stroke="#000" stroke-width="0.22" font-weight="bold" transform="rotate(-90 750.1 178.3)" textLength="6.0" lengthAdjust="spacingAndGlyphs">0.5 G/R</text>
<text x="752.1" y="178.3" font-size="2.1" fill="#000" stroke="#000" stroke-width="0.22" font-weight="bold" transform="rotate(-90 752.1 178.3)" textLength="6.0" lengthAdjust="spacingAndGlyphs">0.5 G/R</text>
<text x="754.0" y="178.3" font-size="2.1" fill="#000" stroke="#000" stroke-width="0.22" font-weight="bold" transform="rotate(-90 754.0 178.3)" textLength="6.0" lengthAdjust="spacingAndGlyphs">0.5 G/R</text>
<text x="756.0" y="178.3" font-size="2.1" fill="#000" stroke="#000" stroke-width="0.22" font-weight="bold" transform="rotate(-90 756.0 178.3)" textLength="6.0" lengthAdjust="spacingAndGlyphs">0.5 G/R</text>
<text x="758.0" y="178.3" font-size="2.1" fill="#000" stroke="#000" stroke-width="0.22" font-weight="bold" transform="rotate(-90 758.0 178.3)" textLength="6.0" lengthAdjust="spacingAndGlyphs">0.5 G/R</text>
<text x="759.9" y="178.3" font-size="2.1" fill="#000" stroke="#000" stroke-width="0.22" font-weight="bold" transform="rotate(-90 759.9 178.3)" textLength="6.0" lengthAdjust="spacingAndGlyphs">0.5 G/R</text>
<text x="761.9" y="178.3" font-size="2.1" fill="#000" stroke="#000" stroke-width="0.22" font-weight="bold" transform="rotate(-90 761.9 178.3)" textLength="6.0" lengthAdjust="spacingAndGlyphs">0.5 G/R</text>
<text x="763.8" y="178.3" font-size="2.1" fill="#000" stroke="#000" stroke-width="0.22" font-weight="bold" transform="rotate(-90 763.8 178.3)" textLength="6.0" lengthAdjust="spacingAndGlyphs">0.5 G/R</text>
<text x="765.8" y="178.3" font-size="2.1" fill="#000" stroke="#000" stroke-width="0.22" font-weight="bold" transform="rotate(-90 765.8 178.3)" textLength="6.0" lengthAdjust="spacingAndGlyphs">0.5 G/R</text>
<text x="767.7" y="178.3" font-size="2.1" fill="#000" stroke="#000" stroke-width="0.22" font-weight="bold" transform="rotate(-90 767.7 178.3)" textLength="6.0" lengthAdjust="spacingAndGlyphs">0.5 G/R</text>
<text x="769.6" y="178.3" font-size="2.1" fill="#000" stroke="#000" stroke-width="0.22" font-weight="bold" transform="rotate(-90 769.6 178.3)" textLength="6.0" lengthAdjust="spacingAndGlyphs">0.5 G/R</text>
<text x="771.6" y="178.3" font-size="2.1" fill="#000" stroke="#000" stroke-width="0.22" font-weight="bold" transform="rotate(-90 771.6 178.3)" textLength="6.0" lengthAdjust="spacingAndGlyphs">0.5 G/R</text>
<text x="739.4" y="186.8" font-size="2.1" fill="#000" stroke="#000" stroke-width="0.22" font-weight="bold" transform="rotate(-90 739.4 186.8)" textLength="14.5" lengthAdjust="spacingAndGlyphs">0.85 R/W B/Y</text>
<path d="M739.0 171.4V188.0" stroke="#1c1c1c" stroke-width="0.47000000000000003"/>
<text x="741.1" y="186.8" font-size="2.1" fill="#000" stroke="#000" stroke-width="0.22" font-weight="bold" transform="rotate(-90 741.1 186.8)" textLength="14.5" lengthAdjust="spacingAndGlyphs">0.85 R/W B/Y</text>
<path d="M740.8 171.4V188.0" stroke="#1c1c1c" stroke-width="0.47000000000000003"/>
<text x="743.0" y="186.8" font-size="2.1" fill="#000" stroke="#000" stroke-width="0.22" font-weight="bold" transform="rotate(-90 743.0 186.8)" textLength="14.5" lengthAdjust="spacingAndGlyphs">0.85 R/W B/Y</text>
<path d="M742.6 171.4V188.0" stroke="#1c1c1c" stroke-width="0.47000000000000003"/>
<text x="744.8" y="186.8" font-size="2.1" fill="#000" stroke="#000" stroke-width="0.22" font-weight="bold" transform="rotate(-90 744.8 186.8)" textLength="14.5" lengthAdjust="spacingAndGlyphs">0.85 R/W B/Y</text>
<path d="M744.4 171.4V188.0" stroke="#1c1c1c" stroke-width="0.47000000000000003"/>
<circle cx="750.4" cy="190.3" r="2.7" stroke="#262626" stroke-width="0.5" fill="#fff"/>
<text x="750.4" y="191.3" font-size="2.8" fill="#222" stroke="#222" stroke-width="0.14" text-anchor="middle">5</text>
<path d="M748.5 192.3L744.4 195.6" stroke="#262626" stroke-width="0.5" fill="none"/>
<path d="M657.4 195.4H768.0" stroke="#1c1c1c" stroke-width="0.67"/>
<path d="M653.4 197.3H768.0" stroke="#1c1c1c" stroke-width="0.67"/>
<path d="M621.2 199.2H637.4" stroke="#666" stroke-width="0.62"/>
<path d="M685.5 199.2H740.8" stroke="#1c1c1c" stroke-width="0.67"/>
<path d="M615.4 201.0H637.4" stroke="#1c1c1c" stroke-width="0.67"/>
<path d="M618.9 203.0H685.5" stroke="#1c1c1c" stroke-width="0.67"/>
<path d="M633.3 205.3H768.0" stroke="#1c1c1c" stroke-width="0.67"/>
<path d="M677.5 207.3H768.0" stroke="#1c1c1c" stroke-width="0.67"/>
<path d="M673.5 208.8H768.0" stroke="#1c1c1c" stroke-width="0.67"/>
<path d="M592.0 207.3H613.6" stroke="#1c1c1c" stroke-width="0.67"/>
<path d="M592.0 209.2H613.6" stroke="#1c1c1c" stroke-width="0.67"/>
<path d="M592.0 211.0H633.3" stroke="#1c1c1c" stroke-width="0.67"/>
<path d="M592.0 215.1H620.0" stroke="#1c1c1c" stroke-width="0.67"/>
<path d="M641.4 215.1H768.0" stroke="#1c1c1c" stroke-width="0.67"/>
<path d="M592.0 216.8H768.0" stroke="#1c1c1c" stroke-width="0.67"/>
<path d="M592.0 218.4H768.0" stroke="#1c1c1c" stroke-width="0.67"/>
<rect x="592" y="219.6" width="176" height="6" fill="#cbcbcb"/>
<path d="M592.0 220.3H768.0" stroke="#9a9a9a" stroke-width="0.47000000000000003"/>
<path d="M592.0 222.6H768.0" stroke="#9a9a9a" stroke-width="0.47000000000000003"/>
<path d="M592.0 224.9H768.0" stroke="#9a9a9a" stroke-width="0.47000000000000003"/>
<path d="M736.2 229.3H768.0" stroke="#1c1c1c" stroke-width="0.67"/>
<path d="M665.4 231.0H768.0" stroke="#1c1c1c" stroke-width="0.67"/>
<path d="M661.4 236.6H768.0" stroke="#1c1c1c" stroke-width="0.67"/>
<path d="M645.4 238.4H768.0" stroke="#1c1c1c" stroke-width="0.67"/>
<path d="M613.6 207.3V360.0" stroke="#1c1c1c" stroke-width="0.67"/>
<path d="M615.4 201.0V360.0" stroke="#1c1c1c" stroke-width="0.67"/>
<path d="M617.2 163.9V345.0" stroke="#8c8c8c" stroke-width="0.72"/>
<path d="M621.2 163.9V199.2" stroke="#666" stroke-width="0.72"/>
<path d="M618.9 203.0V300.0" stroke="#8c8c8c" stroke-width="0.62"/>
<path d="M620.0 203.0V215.1" stroke="#1c1c1c" stroke-width="0.67"/>
<path d="M625.3 163.9V327.6" stroke="#0a0a0a" stroke-width="0.95"/>
<path d="M633.3 163.9V211.0" stroke="#1c1c1c" stroke-width="0.67"/>
<path d="M637.4 163.9V201.0" stroke="#8c8c8c" stroke-width="0.72"/>
<path d="M641.4 163.9V215.1" stroke="#0a0a0a" stroke-width="0.85"/>
<path d="M645.4 163.9V238.4" stroke="#1c1c1c" stroke-width="0.67"/>
<path d="M649.4 163.9V326.6" stroke="#0a0a0a" stroke-width="0.85"/>
<path d="M653.4 163.9V197.3" stroke="#0a0a0a" stroke-width="0.8"/>
<path d="M657.4 163.9V195.4" stroke="#1c1c1c" stroke-width="0.67"/>
<path d="M661.4 163.9V236.6" stroke="#1c1c1c" stroke-width="0.67"/>
<path d="M665.4 163.9V231.0" stroke="#0a0a0a" stroke-width="1.0"/>
<path d="M669.5 203.0V324.2" stroke="#1c1c1c" stroke-width="0.67"/>
<path d="M673.5 163.9V208.8" stroke="#1c1c1c" stroke-width="0.67"/>
<path d="M677.5 163.9V207.3" stroke="#1c1c1c" stroke-width="0.67"/>
<path d="M681.5 163.9V312.5" stroke="#777" stroke-width="0.72"/>
<path d="M685.5 163.9V203.0" stroke="#1c1c1c" stroke-width="0.67"/>
<path d="M736.2 199.2V229.3" stroke="#1c1c1c" stroke-width="0.67"/>
<path d="M740.8 186.0V199.2" stroke="#0a0a0a" stroke-width="0.8"/>
<path d="M744.1 195.4V310.2" stroke="#1c1c1c" stroke-width="0.67"/>
<rect x="446.0" y="175.2" width="10.3" height="24.2" stroke="#1c1c1c" stroke-width="0.67" fill="none"/>
<path d="M446.0 185.2H456.3" stroke="#1c1c1c" stroke-width="0.67"/>
<path d="M456.0 179.5L448.4 179.5L448.4 183.0L456.0 183.0" stroke="#1c1c1c" stroke-width="0.47000000000000003" fill="none"/>
<path d="M456.3 183.0H504.4" stroke="#0a0a0a" stroke-width="0.9"/>
<path d="M456.3 187.6L531.6 187.6L531.6 376.0" stroke="#1c1c1c" stroke-width="0.62" fill="none"/>
<path d="M456.3 191.4L543.3 191.4L543.3 207.4L560.0 207.4" stroke="#555" stroke-width="0.62" fill="none"/>
<path d="M456.3 195.5L541.2 195.5" stroke="#555" stroke-width="0.62" fill="none"/>
<path d="M541.2 195.5V376.0" stroke="#a8a8a8" stroke-width="1.1"/>
<path d="M456.3 197.3L477.8 197.3L477.8 242.6L455.0 242.6" stroke="#1c1c1c" stroke-width="0.5700000000000001" fill="none"/>
<text x="457.6" y="174.4" font-size="2.2" fill="#000" stroke="#000" stroke-width="0.14">Glow Relay</text>
<text x="458.5" y="176.4" font-size="2.2" fill="#000" stroke="#000" stroke-width="0.14">1.25 W/R</text>
<text x="457.5" y="178.8" font-size="2.4499999999999997" fill="#000" stroke="#000" stroke-width="0.22" font-weight="bold">■ 1.25 R/W</text>
<text x="457.5" y="182.4" font-size="2.4499999999999997" fill="#000" stroke="#000" stroke-width="0.22" font-weight="bold">■ 1.25 R</text>
<text x="454.0" y="187.0" font-size="2.4499999999999997" fill="#000" stroke="#000" stroke-width="0.22" font-weight="bold" textLength="16" lengthAdjust="spacingAndGlyphs">■ 1.25 B/W 5A</text>
<text x="454.0" y="188.9" font-size="2.4499999999999997" fill="#000" stroke="#000" stroke-width="0.22" font-weight="bold" textLength="17" lengthAdjust="spacingAndGlyphs">■ 0.85 R/B</text>
<text x="454.0" y="190.8" font-size="2.4499999999999997" fill="#000" stroke="#000" stroke-width="0.22" font-weight="bold" textLength="16" lengthAdjust="spacingAndGlyphs">■ 1.25 W/R</text>
<text x="454.0" y="192.7" font-size="2.4499999999999997" fill="#000" stroke="#000" stroke-width="0.22" font-weight="bold" textLength="17" lengthAdjust="spacingAndGlyphs">■ 0.85 L/W</text>
<text x="454.0" y="194.6" font-size="2.4499999999999997" fill="#000" stroke="#000" stroke-width="0.22" font-weight="bold" textLength="16" lengthAdjust="spacingAndGlyphs">■ 0.85 G/R</text>
<text x="454.0" y="196.5" font-size="2.4499999999999997" fill="#000" stroke="#000" stroke-width="0.22" font-weight="bold" textLength="17" lengthAdjust="spacingAndGlyphs">■ 1.25 B/Y</text>
<text x="457.5" y="201.0" font-size="2.55" fill="#000" stroke="#000" stroke-width="0.22" font-weight="bold">Starter</text>
<text x="457.5" y="203.2" font-size="2.55" fill="#000" stroke="#000" stroke-width="0.22" font-weight="bold">Relay</text>
<text x="457.5" y="205.2" font-size="2.2" fill="#000" stroke="#000" stroke-width="0.14">0.85 B</text>
<rect x="446.0" y="205.5" width="10.3" height="14.1" stroke="#1c1c1c" stroke-width="0.67" fill="none"/>
<path d="M446.0 213.3H456.3" stroke="#1c1c1c" stroke-width="0.67"/>
<text x="434.0" y="212.0" font-size="2.7" fill="#111" stroke="#111" stroke-width="0.14" textLength="9" lengthAdjust="spacingAndGlyphs">Fly. SW</text>
<rect x="456.3" y="208.0" width="47.1" height="5.4" stroke="#1c1c1c" stroke-width="0.5700000000000001" fill="none"/>
<path d="M456.3 211.4H560.0" stroke="#1c1c1c" stroke-width="0.62"/>
<path d="M456.3 212.3H506.0" stroke="#444" stroke-width="0.52"/>
<text x="457.3" y="207.2" font-size="2.4499999999999997" fill="#000" stroke="#000" stroke-width="0.22" font-weight="bold">■ 0.85 R/W</text>
<text x="457.3" y="210.8" font-size="2.4499999999999997" fill="#000" stroke="#000" stroke-width="0.22" font-weight="bold">■ 0.85 G/W B</text>
<text x="457.3" y="216.5" font-size="2.4499999999999997" fill="#000" stroke="#000" stroke-width="0.22" font-weight="bold">■ 0.85 B</text>
<path d="M450.0 211.0L452.5 212.5L454.0 211.0" stroke="#262626" stroke-width="0.4" fill="none"/>
<rect x="456.3" y="217.4" width="19.4" height="7.8" stroke="#1c1c1c" stroke-width="0.52" fill="none"/>
<text x="457.5" y="220.4" font-size="2.2" fill="#000" stroke="#000" stroke-width="0.14">Horn</text>
<text x="457.5" y="222.4" font-size="2.2" fill="#000" stroke="#000" stroke-width="0.14">0.85 G/R</text>
<text x="457.3" y="224.4" font-size="2.4499999999999997" fill="#000" stroke="#000" stroke-width="0.22" font-weight="bold">■ 0.85 G/B</text>
<rect x="438.0" y="223.0" width="17.4" height="11.5" stroke="#1c1c1c" stroke-width="0.67" fill="none"/>
<text x="432.5" y="229.4" font-size="2.7" fill="#111" stroke="#111" stroke-width="0.14" textLength="5" lengthAdjust="spacingAndGlyphs">Horn</text>
<path d="M441.0 226.0V233.5" stroke="#1c1c1c" stroke-width="0.52"/>
<path d="M445.0 226.0V233.5" stroke="#1c1c1c" stroke-width="0.52"/>
<path d="M449.0 226.0V233.5" stroke="#1c1c1c" stroke-width="0.52"/>
<path d="M439.5 233.5H451.0" stroke="#1c1c1c" stroke-width="0.52"/>
<text x="459.0" y="228.6" font-size="2.2" fill="#000" stroke="#000" stroke-width="0.14">Horn</text>
<text x="457.8" y="230.8" font-size="2.2" fill="#000" stroke="#000" stroke-width="0.14">0.85 G/B</text>
<rect x="446.3" y="240.8" width="8.4" height="9.7" stroke="#1c1c1c" stroke-width="0.67" fill="none"/>
<text x="431.8" y="246.0" font-size="2.7" fill="#111" stroke="#111" stroke-width="0.14" textLength="12" lengthAdjust="spacingAndGlyphs">Air heater</text>
<text x="456.0" y="239.2" font-size="2.2" fill="#000" stroke="#000" stroke-width="0.14">Glow</text>
<path d="M455.0 244.8H521.2" stroke="#1c1c1c" stroke-width="0.62"/>
<path d="M455.0 246.7H516.9" stroke="#1c1c1c" stroke-width="0.62"/>
<path d="M455.0 248.6H511.1" stroke="#1c1c1c" stroke-width="0.62"/>
<text x="455.0" y="242.4" font-size="2.4499999999999997" fill="#000" stroke="#000" stroke-width="0.22" font-weight="bold" textLength="14" lengthAdjust="spacingAndGlyphs">■ 3 W/R</text>
<text x="455.0" y="244.5" font-size="2.4499999999999997" fill="#000" stroke="#000" stroke-width="0.22" font-weight="bold" textLength="16" lengthAdjust="spacingAndGlyphs">■ 1.25 R/W B</text>
<text x="455.0" y="246.5" font-size="2.4499999999999997" fill="#000" stroke="#000" stroke-width="0.22" font-weight="bold" textLength="14" lengthAdjust="spacingAndGlyphs">■ 0.85 B/Y</text>
<text x="455.0" y="248.6" font-size="2.4499999999999997" fill="#000" stroke="#000" stroke-width="0.22" font-weight="bold" textLength="16" lengthAdjust="spacingAndGlyphs">■ 1.25 B/R</text>
<text x="457.5" y="252.6" font-size="2.4499999999999997" fill="#000" stroke="#000" stroke-width="0.22" font-weight="bold">■ 0.85 B</text>
<text x="458.0" y="255.6" font-size="2.2" fill="#000" stroke="#000" stroke-width="0.14">Timer</text>
<text x="458.0" y="257.6" font-size="2.2" fill="#000" stroke="#000" stroke-width="0.14">0.85 R/B</text>
<rect x="446.3" y="258.9" width="9.1" height="9.1" stroke="#1c1c1c" stroke-width="0.67" fill="none"/>
<text x="434.3" y="263.8" font-size="2.7" fill="#111" stroke="#111" stroke-width="0.14" textLength="6" lengthAdjust="spacingAndGlyphs">Timer</text>
<text x="448.0" y="264.6" font-size="2" fill="#333" stroke="#333" stroke-width="0.14">Timer</text>
<text x="456.5" y="259.6" font-size="2.4499999999999997" fill="#000" stroke="#000" stroke-width="0.22" font-weight="bold">■ 0.85 R/B L</text>
<path d="M456.0 262.4L538.9 262.4" stroke="#1c1c1c" stroke-width="0.62" fill="none"/>
<path d="M538.9 262.4V376.0" stroke="#909090" stroke-width="0.8"/>
<path d="M456.0 264.5L536.9 264.5" stroke="#1c1c1c" stroke-width="0.62" fill="none"/>
<path d="M536.9 264.5V376.0" stroke="#909090" stroke-width="0.8"/>
<path d="M456.0 266.4H518.2" stroke="#1c1c1c" stroke-width="0.62"/>
<text x="456.5" y="262.0" font-size="2.4499999999999997" fill="#000" stroke="#000" stroke-width="0.22" font-weight="bold">■ 0.85 G/W</text>
<text x="456.5" y="264.1" font-size="2.4499999999999997" fill="#000" stroke="#000" stroke-width="0.22" font-weight="bold">■ 0.85 L/Y</text>
<text x="456.5" y="266.2" font-size="2.4499999999999997" fill="#000" stroke="#000" stroke-width="0.22" font-weight="bold">■ 0.85 B</text>
<path d="M475.4 262.4V280.6" stroke="#1c1c1c" stroke-width="0.5700000000000001"/>
<path d="M503.4 213.4V262.4" stroke="#1c1c1c" stroke-width="0.5700000000000001"/>
<text x="457.5" y="271.6" font-size="2.2" fill="#000" stroke="#000" stroke-width="0.14">Safety</text>
<text x="457.5" y="273.6" font-size="2.2" fill="#000" stroke="#000" stroke-width="0.14">0.85 R/W</text>
<rect x="446.3" y="274.3" width="9.1" height="13.7" stroke="#1c1c1c" stroke-width="0.67" fill="none"/>
<path d="M446.3 281.0H455.4" stroke="#1c1c1c" stroke-width="0.47000000000000003"/>
<path d="M450.0 280.5L452.5 282.0L454.0 280.5" stroke="#262626" stroke-width="0.4" fill="none"/>
<text x="456.5" y="276.0" font-size="2.4499999999999997" fill="#000" stroke="#000" stroke-width="0.22" font-weight="bold">■ 0.85 R/W</text>
<path d="M456.0 280.6H475.4" stroke="#1c1c1c" stroke-width="0.62"/>
<text x="456.5" y="280.2" font-size="2.4499999999999997" fill="#000" stroke="#000" stroke-width="0.22" font-weight="bold">■ 0.85 G/W B</text>
<path d="M456.0 282.4H507.5" stroke="#0a0a0a" stroke-width="0.8"/>
<text x="456.5" y="284.8" font-size="2.4499999999999997" fill="#000" stroke="#000" stroke-width="0.22" font-weight="bold">■ 0.85 B</text>
<path d="M456.0 286.4L473.6 286.4L473.6 298.3L456.0 298.3" stroke="#0a0a0a" stroke-width="0.8" fill="none"/>
<text x="457.5" y="290.5" font-size="2.4499999999999997" fill="#000" stroke="#000" stroke-width="0.22" font-weight="bold">Eng stop</text>
<text x="457.5" y="292.6" font-size="2.2" fill="#000" stroke="#000" stroke-width="0.14">0.85 W/R</text>
<rect x="444.0" y="294.2" width="11.4" height="14.1" stroke="#1c1c1c" stroke-width="0.67" fill="none"/>
<rect x="446.3" y="296.5" width="6.7" height="6.5" stroke="#1c1c1c" stroke-width="0.52" fill="none"/>
<text x="425.8" y="301.2" font-size="2.7" fill="#111" stroke="#111" stroke-width="0.14" textLength="13.5" lengthAdjust="spacingAndGlyphs">Eng. Stop Sol.</text>
<path d="M447.0 298.0L450.0 298.0L450.0 301.5L452.0 301.5" stroke="#0a0a0a" stroke-width="0.52" fill="none"/>
<text x="448.2" y="306.6" font-size="2.2" fill="#222" stroke="#222" stroke-width="0.14">M</text>
<path d="M456.0 299.6H515.2" stroke="#1c1c1c" stroke-width="0.62"/>
<path d="M456.0 301.8L534.7 301.8L534.7 376.0" stroke="#0a0a0a" stroke-width="0.8" fill="none"/>
<text x="456.3" y="298.0" font-size="2.4499999999999997" fill="#000" stroke="#000" stroke-width="0.22" font-weight="bold">■ 0.85 R/W B</text>
<text x="456.3" y="300.9" font-size="2.4499999999999997" fill="#000" stroke="#000" stroke-width="0.22" font-weight="bold">■ 1.25 W/R</text>
<text x="457.5" y="305.4" font-size="2.2" fill="#000" stroke="#000" stroke-width="0.14">Safety</text>
<text x="457.5" y="307.4" font-size="2.2" fill="#000" stroke="#000" stroke-width="0.14">0.85 B/W L</text>
<rect x="447.2" y="312.1" width="8.2" height="7.5" stroke="#1c1c1c" stroke-width="0.67" fill="none"/>
<text x="431.0" y="317.0" font-size="2.7" fill="#111" stroke="#111" stroke-width="0.14" textLength="12.5" lengthAdjust="spacingAndGlyphs">Safety relay</text>
<path d="M448.5 318.0L450.0 318.0L450.0 315.0L453.5 315.0" stroke="#1c1c1c" stroke-width="0.52" fill="none"/>
<circle cx="452.5" cy="315.8" r="1.1" stroke="#262626" stroke-width="0.4" fill="none"/>
<text x="457.5" y="312.8" font-size="2.2" fill="#000" stroke="#000" stroke-width="0.14">Safety</text>
<text x="456.3" y="315.2" font-size="2.4499999999999997" fill="#000" stroke="#000" stroke-width="0.22" font-weight="bold">■ 0.85 B/W L</text>
<path d="M456.0 315.6L519.4 315.6L519.4 219.7" stroke="#444" stroke-width="0.62" fill="none"/>
<rect x="446.3" y="324.0" width="9.1" height="7.6" stroke="#1c1c1c" stroke-width="0.67" fill="none"/>
<text x="428.8" y="328.8" font-size="2.7" fill="#111" stroke="#111" stroke-width="0.14" textLength="13" lengthAdjust="spacingAndGlyphs">Overheat SW</text>
<path d="M448.0 329.5L450.0 326.5L453.0 328.5" stroke="#262626" stroke-width="0.5" fill="none"/>
<text x="457.5" y="324.8" font-size="2.2" fill="#000" stroke="#000" stroke-width="0.14">Temp</text>
<text x="456.3" y="327.0" font-size="2.4499999999999997" fill="#000" stroke="#000" stroke-width="0.22" font-weight="bold">■ 0.85 G/B</text>
<path d="M456.0 327.4L524.6 327.4L524.6 374.6" stroke="#1c1c1c" stroke-width="0.62" fill="none"/>
<rect x="442.2" y="335.7" width="13.2" height="9.8" stroke="#1c1c1c" stroke-width="0.67" fill="none"/>
<text x="424.0" y="340.8" font-size="2.7" fill="#111" stroke="#111" stroke-width="0.14" textLength="14" lengthAdjust="spacingAndGlyphs">Eng Oil Press. SW</text>
<rect x="443" y="336.4" width="83" height="1.6" fill="#c8c8c8"/>
<path d="M447.0 339.0L449.5 341.5L452.0 339.0" stroke="#262626" stroke-width="0.5" fill="none"/>
<path d="M448.0 344.0L449.5 342.0L451.0 344.0" stroke="#262626" stroke-width="0.5" fill="none"/>
<text x="459.0" y="333.8" font-size="2.2" fill="#000" stroke="#000" stroke-width="0.14">Oil Press</text>
<text x="457.5" y="335.8" font-size="2.2" fill="#000" stroke="#000" stroke-width="0.14">0.85 Y/B</text>
<text x="456.3" y="338.4" font-size="2.4499999999999997" fill="#000" stroke="#000" stroke-width="0.22" font-weight="bold">■ 0.85 Y/B</text>
<path d="M456.0 339.0L533.3 339.0L533.3 376.0" stroke="#0a0a0a" stroke-width="0.72" fill="none"/>
<path d="M526.6 337.2L526.6 207.0" stroke="#777" stroke-width="0.52" fill="none"/>
<circle cx="454.1" cy="352.0" r="2" stroke="#262626" stroke-width="0.5" fill="none"/>
<text x="434.3" y="352.8" font-size="2.7" fill="#111" stroke="#111" stroke-width="0.14" textLength="10.5" lengthAdjust="spacingAndGlyphs">Fuel Pump</text>
<path d="M456.0 347.8L457.5 346.6L460.0 346.6" stroke="#262626" stroke-width="0.4" fill="none"/>
<text x="459.0" y="346.0" font-size="2.2" fill="#000" stroke="#000" stroke-width="0.14">Pump</text>
<text x="458.0" y="348.4" font-size="2.2" fill="#000" stroke="#000" stroke-width="0.14">0.85 G/W</text>
<text x="456.3" y="351.2" font-size="2.4499999999999997" fill="#000" stroke="#000" stroke-width="0.22" font-weight="bold" textLength="15" lengthAdjust="spacingAndGlyphs">■ 0.85 G/W R</text>
<path d="M456.0 351.2H531.0" stroke="#0a0a0a" stroke-width="0.72"/>
<path d="M456.0 352.8H531.0" stroke="#0a0a0a" stroke-width="0.72"/>
<rect x="444.7" y="358.3" width="10.7" height="9.2" stroke="#1c1c1c" stroke-width="0.67" fill="none"/>
<rect x="446.0" y="360.2" width="8.6" height="5.8" stroke="#1c1c1c" stroke-width="0.47000000000000003" fill="none"/>
<text x="435.2" y="363.0" font-size="2.7" fill="#111" stroke="#111" stroke-width="0.14" textLength="5" lengthAdjust="spacingAndGlyphs">Fuel</text>
<path d="M448.0 363.5L449.0 361.5L450.0 363.5L451.0 361.5L452.0 363.5L453.0 361.5" stroke="#262626" stroke-width="0.4" fill="none"/>
<text x="457.5" y="358.4" font-size="2.2" fill="#000" stroke="#000" stroke-width="0.14">Fuel</text>
<text x="456.3" y="361.2" font-size="2.4499999999999997" fill="#000" stroke="#000" stroke-width="0.22" font-weight="bold">■ 0.85 Y/G</text>
<text x="456.3" y="365.0" font-size="2.4499999999999997" fill="#000" stroke="#000" stroke-width="0.22" font-weight="bold">■ 0.85 B</text>
<path d="M456.0 361.4H531.0" stroke="#0a0a0a" stroke-width="0.72"/>
<path d="M456.0 365.4H529.2" stroke="#1c1c1c" stroke-width="0.62"/>
<rect x="436.2" y="369.1" width="19.2" height="10.3" stroke="#1c1c1c" stroke-width="0.67" fill="none"/>
<circle cx="440.0" cy="374.1" r="1.9" stroke="#0a0a0a" stroke-width="0.6" fill="none"/>
<circle cx="440.0" cy="374.1" r="0.8" stroke="#0a0a0a" stroke-width="0.4" fill="#111"/>
<text x="423.5" y="375.0" font-size="2.7" fill="#111" stroke="#111" stroke-width="0.14" textLength="11" lengthAdjust="spacingAndGlyphs">Washer Pump</text>
<path d="M440.0 374.1H524.6" stroke="#0a0a0a" stroke-width="0.8"/>
<path d="M456.0 375.5H523.5" stroke="#1c1c1c" stroke-width="0.62"/>
<text x="457.5" y="370.2" font-size="2.55" fill="#000" stroke="#000" stroke-width="0.22" font-weight="bold">Washer</text>
<text x="457.5" y="372.4" font-size="2.55" fill="#000" stroke="#000" stroke-width="0.22" font-weight="bold">0.85 L</text>
<text x="456.3" y="375.2" font-size="2.4499999999999997" fill="#000" stroke="#000" stroke-width="0.22" font-weight="bold">■ 0.85 L/W</text>
<path d="M446.0 373.0L449.0 372.3" stroke="#262626" stroke-width="0.4" fill="none"/>
<path d="M511.1 248.6L511.1 207.4L560.0 207.4" stroke="#333" stroke-width="0.5700000000000001" fill="none"/>
<path d="M513.2 285.0L513.2 209.0L560.0 209.0" stroke="#333" stroke-width="0.5700000000000001" fill="none"/>
<path d="M515.2 299.6L515.2 215.1L560.0 215.1" stroke="#333" stroke-width="0.5700000000000001" fill="none"/>
<path d="M516.9 246.7L516.9 217.2L560.0 217.2" stroke="#444" stroke-width="0.5700000000000001" fill="none"/>
<path d="M518.2 266.4L518.2 218.4L560.0 218.4" stroke="#555" stroke-width="0.5700000000000001" fill="none"/>
<path d="M519.4 219.7H560.0" stroke="#777" stroke-width="0.5700000000000001"/>
<rect x="524.9" y="220" width="35" height="4.8" fill="#c9c9c9"/>
<path d="M524.9 220.4H560.0" stroke="#9a9a9a" stroke-width="0.47000000000000003"/>
<path d="M524.9 222.2H560.0" stroke="#9a9a9a" stroke-width="0.47000000000000003"/>
<path d="M524.9 224.2H560.0" stroke="#9a9a9a" stroke-width="0.47000000000000003"/>
<path d="M524.9 220.5V376.0" stroke="#6a6a6a" stroke-width="0.5700000000000001"/>
<path d="M526.5 221.8V376.0" stroke="#6a6a6a" stroke-width="0.5700000000000001"/>
<path d="M528.2 223.4V376.0" stroke="#6a6a6a" stroke-width="0.5700000000000001"/>
<path d="M529.5 225.0V376.0" stroke="#6a6a6a" stroke-width="0.5700000000000001"/>
<circle cx="535.2" cy="203.0" r="2.7" stroke="#262626" stroke-width="0.5" fill="#fff"/>
<text x="535.2" y="204.0" font-size="2.8" fill="#222" stroke="#222" stroke-width="0.14" text-anchor="middle">9</text>
<path d="M533.4 205.2L531.5 208.3" stroke="#262626" stroke-width="0.5" fill="none"/>
<text x="564.3" y="203.4" font-size="2.3" fill="#222" stroke="#222" stroke-width="0.14">Relay-1</text>
<text x="566.5" y="201.2" font-size="2.3" fill="#222" stroke="#222" stroke-width="0.14">12P</text>
<text x="577.0" y="203.4" font-size="2.3" fill="#222" stroke="#222" stroke-width="0.14">Relay-2</text>
<text x="579.0" y="201.2" font-size="2.3" fill="#222" stroke="#222" stroke-width="0.14">12P</text>
<text x="559.4" y="208.4" font-size="2.65" fill="#000" stroke="#000" stroke-width="0.22" font-weight="bold" textLength="13.2" lengthAdjust="spacingAndGlyphs">0.85 R/W B</text>
<text x="577.4" y="208.4" font-size="2.65" fill="#000" stroke="#000" stroke-width="0.22" font-weight="bold" textLength="14.2" lengthAdjust="spacingAndGlyphs">0.85 R/W B</text>
<text x="559.4" y="210.4" font-size="2.65" fill="#000" stroke="#000" stroke-width="0.22" font-weight="bold" textLength="13.2" lengthAdjust="spacingAndGlyphs">0.85 R/W B</text>
<text x="577.4" y="210.4" font-size="2.65" fill="#000" stroke="#000" stroke-width="0.22" font-weight="bold" textLength="14.2" lengthAdjust="spacingAndGlyphs">0.85 R/W B</text>
<text x="559.4" y="215.7" font-size="2.65" fill="#000" stroke="#000" stroke-width="0.22" font-weight="bold" textLength="13.2" lengthAdjust="spacingAndGlyphs">0.85 R/W B</text>
<text x="577.4" y="215.7" font-size="2.65" fill="#000" stroke="#000" stroke-width="0.22" font-weight="bold" textLength="14.2" lengthAdjust="spacingAndGlyphs">0.85 R/W B</text>
<text x="559.4" y="217.7" font-size="2.65" fill="#000" stroke="#000" stroke-width="0.22" font-weight="bold" textLength="13.2" lengthAdjust="spacingAndGlyphs">0.85 R/W B</text>
<text x="577.4" y="217.7" font-size="2.65" fill="#000" stroke="#000" stroke-width="0.22" font-weight="bold" textLength="14.2" lengthAdjust="spacingAndGlyphs">0.85 R/W B</text>
<text x="559.4" y="219.7" font-size="2.65" fill="#000" stroke="#000" stroke-width="0.22" font-weight="bold" textLength="13.2" lengthAdjust="spacingAndGlyphs">0.85 R/W B</text>
<text x="577.4" y="219.7" font-size="2.65" fill="#000" stroke="#000" stroke-width="0.22" font-weight="bold" textLength="14.2" lengthAdjust="spacingAndGlyphs">0.85 R/W B</text>
<text x="559.4" y="221.7" font-size="2.65" fill="#000" stroke="#000" stroke-width="0.22" font-weight="bold" textLength="13.2" lengthAdjust="spacingAndGlyphs">0.85 R/W B</text>
<text x="577.4" y="221.7" font-size="2.65" fill="#000" stroke="#000" stroke-width="0.22" font-weight="bold" textLength="14.2" lengthAdjust="spacingAndGlyphs">0.85 R/W B</text>
<text x="559.4" y="223.7" font-size="2.65" fill="#000" stroke="#000" stroke-width="0.22" font-weight="bold" textLength="13.2" lengthAdjust="spacingAndGlyphs">0.85 R/W B</text>
<text x="577.4" y="223.7" font-size="2.65" fill="#000" stroke="#000" stroke-width="0.22" font-weight="bold" textLength="14.2" lengthAdjust="spacingAndGlyphs">0.85 R/W B</text>
<text x="559.4" y="225.7" font-size="2.65" fill="#000" stroke="#000" stroke-width="0.22" font-weight="bold" textLength="13.2" lengthAdjust="spacingAndGlyphs">0.85 R/W B</text>
<text x="577.4" y="225.7" font-size="2.65" fill="#000" stroke="#000" stroke-width="0.22" font-weight="bold" textLength="14.2" lengthAdjust="spacingAndGlyphs">0.85 R/W B</text>
<rect x="572.2" y="206.4" width="5" height="22.4" fill="#2b2b2b"/>
<text x="566.5" y="227.4" font-size="2.55" fill="#000" stroke="#000" stroke-width="0.22" font-weight="bold" textLength="7" lengthAdjust="spacingAndGlyphs">0.85 B</text>
<text x="575.6" y="227.4" font-size="2.55" fill="#000" stroke="#000" stroke-width="0.22" font-weight="bold" textLength="6.5" lengthAdjust="spacingAndGlyphs">0.85 B</text>
<text x="567.5" y="229.6" font-size="2.55" fill="#000" stroke="#000" stroke-width="0.22" font-weight="bold" textLength="6.5" lengthAdjust="spacingAndGlyphs">0.85 L</text>
<text x="575.6" y="229.6" font-size="2.55" fill="#000" stroke="#000" stroke-width="0.22" font-weight="bold" textLength="6.3" lengthAdjust="spacingAndGlyphs">0.85 L</text>
<text x="525.9" y="389.8" font-size="2.7" fill="#000" stroke="#000" stroke-width="0.22" font-weight="bold" transform="rotate(-90 525.9 389.8)" textLength="13.2" lengthAdjust="spacingAndGlyphs">0.85 R/W B/Y</text>
<text x="527.8" y="389.8" font-size="2.7" fill="#000" stroke="#000" stroke-width="0.22" font-weight="bold" transform="rotate(-90 527.8 389.8)" textLength="12.4" lengthAdjust="spacingAndGlyphs">0.85 R/W B/Y</text>
<text x="529.6" y="389.8" font-size="2.7" fill="#000" stroke="#000" stroke-width="0.22" font-weight="bold" transform="rotate(-90 529.6 389.8)" textLength="13.2" lengthAdjust="spacingAndGlyphs">0.85 R/W B/Y</text>
<text x="531.5" y="389.8" font-size="2.7" fill="#000" stroke="#000" stroke-width="0.22" font-weight="bold" transform="rotate(-90 531.5 389.8)" textLength="12.4" lengthAdjust="spacingAndGlyphs">0.85 R/W B/Y</text>
<text x="533.5" y="389.8" font-size="2.7" fill="#000" stroke="#000" stroke-width="0.22" font-weight="bold" transform="rotate(-90 533.5 389.8)" textLength="13.2" lengthAdjust="spacingAndGlyphs">0.85 R/W B/Y</text>
<text x="535.4" y="389.8" font-size="2.7" fill="#000" stroke="#000" stroke-width="0.22" font-weight="bold" transform="rotate(-90 535.4 389.8)" textLength="12.4" lengthAdjust="spacingAndGlyphs">0.85 R/W B/Y</text>
<text x="537.2" y="389.8" font-size="2.7" fill="#000" stroke="#000" stroke-width="0.22" font-weight="bold" transform="rotate(-90 537.2 389.8)" textLength="13.2" lengthAdjust="spacingAndGlyphs">0.85 R/W B/Y</text>
<text x="539.1" y="389.8" font-size="2.7" fill="#000" stroke="#000" stroke-width="0.22" font-weight="bold" transform="rotate(-90 539.1 389.8)" textLength="12.4" lengthAdjust="spacingAndGlyphs">0.85 R/W B/Y</text>
<text x="541.5" y="389.8" font-size="2.7" fill="#000" stroke="#000" stroke-width="0.22" font-weight="bold" transform="rotate(-90 541.5 389.8)" textLength="13.2" lengthAdjust="spacingAndGlyphs">0.85 R/W B/Y</text>
<path d="M526.5 390.0L534.1 392.6L541.3 390.0" stroke="#0a0a0a" stroke-width="0.5" fill="none"/>
<rect x="529.7" y="392.3" width="12.1" height="10.8" stroke="#1c1c1c" stroke-width="0.5700000000000001" fill="none"/>
<text x="533.5" y="398.6" font-size="2.0" fill="#444" stroke="#444" stroke-width="0.14">Relay</text>
<text x="533.5" y="405.8" font-size="2.4" fill="#222" stroke="#222" stroke-width="0.14">Ry-1</text>
<path d="M550.4 376.0L550.4 310.6L768.0 310.6" stroke="#1c1c1c" stroke-width="0.5700000000000001" fill="none"/>
<path d="M552.3 376.0L552.3 315.6L768.0 315.6" stroke="#1c1c1c" stroke-width="0.5700000000000001" fill="none"/>
<path d="M554.2 376.0L554.2 317.5L768.0 317.5" stroke="#777" stroke-width="0.5700000000000001" fill="none"/>
<path d="M556.1 376.0L556.1 319.4L768.0 319.4" stroke="#777" stroke-width="0.5700000000000001" fill="none"/>
<path d="M558.2 376.0L558.2 333.7L600.0 333.7" stroke="#0a0a0a" stroke-width="0.9" fill="none"/>
<path d="M559.8 376.0L559.8 337.2L600.0 337.2" stroke="#444" stroke-width="0.5700000000000001" fill="none"/>
<path d="M561.7 376.0L561.7 339.1L600.0 339.1" stroke="#444" stroke-width="0.5700000000000001" fill="none"/>
<path d="M563.6 376.0L563.6 340.9L600.0 340.9" stroke="#444" stroke-width="0.5700000000000001" fill="none"/>
<path d="M565.5 376.0L565.5 342.7L600.0 342.7" stroke="#444" stroke-width="0.5700000000000001" fill="none"/>
<text x="550.6" y="389.8" font-size="2.7" fill="#000" stroke="#000" stroke-width="0.22" font-weight="bold" transform="rotate(-90 550.6 389.8)" textLength="13.2" lengthAdjust="spacingAndGlyphs">0.85 G/W L/Y</text>
<text x="552.5" y="389.8" font-size="2.7" fill="#000" stroke="#000" stroke-width="0.22" font-weight="bold" transform="rotate(-90 552.5 389.8)" textLength="12.4" lengthAdjust="spacingAndGlyphs">0.85 G/W L/Y</text>
<text x="554.5" y="389.8" font-size="2.7" fill="#000" stroke="#000" stroke-width="0.22" font-weight="bold" transform="rotate(-90 554.5 389.8)" textLength="13.2" lengthAdjust="spacingAndGlyphs">0.85 G/W L/Y</text>
<text x="556.4" y="389.8" font-size="2.7" fill="#000" stroke="#000" stroke-width="0.22" font-weight="bold" transform="rotate(-90 556.4 389.8)" textLength="12.4" lengthAdjust="spacingAndGlyphs">0.85 G/W L/Y</text>
<text x="558.5" y="389.8" font-size="2.7" fill="#000" stroke="#000" stroke-width="0.22" font-weight="bold" transform="rotate(-90 558.5 389.8)" textLength="13.2" lengthAdjust="spacingAndGlyphs">0.85 G/W L/Y</text>
<text x="560.0" y="389.8" font-size="2.7" fill="#000" stroke="#000" stroke-width="0.22" font-weight="bold" transform="rotate(-90 560.0 389.8)" textLength="12.4" lengthAdjust="spacingAndGlyphs">0.85 G/W L/Y</text>
<text x="562.0" y="389.8" font-size="2.7" fill="#000" stroke="#000" stroke-width="0.22" font-weight="bold" transform="rotate(-90 562.0 389.8)" textLength="13.2" lengthAdjust="spacingAndGlyphs">0.85 G/W L/Y</text>
<text x="563.9" y="389.8" font-size="2.7" fill="#000" stroke="#000" stroke-width="0.22" font-weight="bold" transform="rotate(-90 563.9 389.8)" textLength="12.4" lengthAdjust="spacingAndGlyphs">0.85 G/W L/Y</text>
<text x="565.8" y="389.8" font-size="2.7" fill="#000" stroke="#000" stroke-width="0.22" font-weight="bold" transform="rotate(-90 565.8 389.8)" textLength="13.2" lengthAdjust="spacingAndGlyphs">0.85 G/W L/Y</text>
<path d="M550.0 390.0L558.6 392.6L566.0 390.0" stroke="#0a0a0a" stroke-width="0.5" fill="none"/>
<rect x="552.3" y="392.3" width="12.1" height="10.8" stroke="#1c1c1c" stroke-width="0.5700000000000001" fill="none"/>
<text x="556.0" y="398.6" font-size="2.0" fill="#444" stroke="#444" stroke-width="0.14">Relay</text>
<text x="556.0" y="405.8" font-size="2.4" fill="#222" stroke="#222" stroke-width="0.14">Ry-2</text>
<path d="M566.5 376.0L566.5 369.1L588.1 369.1L588.1 392.3" stroke="#0a0a0a" stroke-width="0.8" fill="none"/>
<text x="587.6" y="390.7" font-size="2.1" fill="#000" stroke="#000" stroke-width="0.22" font-weight="bold" transform="rotate(-90 587.6 390.7)" textLength="10.7" lengthAdjust="spacingAndGlyphs">0.85 R/W</text>
<text x="581.0" y="391.2" font-size="2.4499999999999997" fill="#000" stroke="#000" stroke-width="0.22" font-weight="bold" textLength="6" lengthAdjust="spacingAndGlyphs">0.85 B</text>
<rect x="582.4" y="392.3" width="12.6" height="10.8" stroke="#1c1c1c" stroke-width="0.5700000000000001" fill="none"/>
<text x="586.0" y="398.6" font-size="2.0" fill="#444" stroke="#444" stroke-width="0.14">Relay</text>
<text x="586.0" y="405.8" font-size="2.4" fill="#222" stroke="#222" stroke-width="0.14">Ry-3</text>
<path d="M550.4 310.7H744.5" stroke="#1c1c1c" stroke-width="0.67"/>
<path d="M744.5 240.0V310.2" stroke="#1c1c1c" stroke-width="0.67"/>
<path d="M681.3 312.5L642.2 312.5L642.2 360.0" stroke="#1c1c1c" stroke-width="0.62" fill="none"/>
<path d="M768.0 312.2L661.6 312.2L661.6 377.0" stroke="#1c1c1c" stroke-width="0.62" fill="none"/>
<path d="M710.3 312.3V357.2" stroke="#1c1c1c" stroke-width="0.62"/>
<rect x="556" y="314.4" width="212" height="6.2" fill="#cacaca"/>
<path d="M556.0 314.8H768.0" stroke="#9a9a9a" stroke-width="0.47000000000000003"/>
<path d="M556.0 316.4H768.0" stroke="#9a9a9a" stroke-width="0.47000000000000003"/>
<path d="M556.0 318.0H768.0" stroke="#9a9a9a" stroke-width="0.47000000000000003"/>
<path d="M556.0 319.6H768.0" stroke="#9a9a9a" stroke-width="0.47000000000000003"/>
<path d="M669.5 324.2H768.0" stroke="#1c1c1c" stroke-width="0.67"/>
<path d="M649.4 326.6L694.6 326.6L694.6 377.0" stroke="#1c1c1c" stroke-width="0.62" fill="none"/>
<path d="M625.3 327.6H768.0" stroke="#0a0a0a" stroke-width="1.0"/>
<path d="M672.0 329.9H768.0" stroke="#777" stroke-width="0.52"/>
<path d="M617.7 331.8H768.0" stroke="#666" stroke-width="0.5700000000000001"/>
<path d="M600.0 333.6H768.0" stroke="#555" stroke-width="0.52"/>
<path d="M617.7 300.0V331.8" stroke="#777" stroke-width="0.52"/>
<rect x="566" y="334.6" width="135" height="4.6" fill="#c6c6c6"/>
<path d="M566.0 335.0H701.0" stroke="#999" stroke-width="0.47000000000000003"/>
<path d="M566.0 336.6H701.0" stroke="#999" stroke-width="0.47000000000000003"/>
<path d="M566.0 338.2H701.0" stroke="#999" stroke-width="0.47000000000000003"/>
<path d="M701.0 335.9H768.0" stroke="#1c1c1c" stroke-width="0.52"/>
<path d="M600.0 340.9H768.0" stroke="#555" stroke-width="0.52"/>
<path d="M600.0 342.7H768.0" stroke="#555" stroke-width="0.52"/>
<path d="M600.0 344.4H768.0" stroke="#555" stroke-width="0.52"/>
<path d="M700.9 337.0V377.0" stroke="#666" stroke-width="0.62"/>
<path d="M602.0 333.6L602.0 345.6L654.7 345.6L654.7 377.0" stroke="#1c1c1c" stroke-width="0.5700000000000001" fill="none"/>
<path d="M600.2 333.6L600.2 347.4L620.0 347.4L620.0 377.0" stroke="#1c1c1c" stroke-width="0.5700000000000001" fill="none"/>
<circle cx="607.1" cy="325.9" r="2.7" stroke="#262626" stroke-width="0.5" fill="#fff"/>
<text x="607.1" y="326.9" font-size="2.8" fill="#222" stroke="#222" stroke-width="0.14" text-anchor="middle">6</text>
<path d="M605.3 328.0L600.6 333.4" stroke="#262626" stroke-width="0.5" fill="none"/>
<circle cx="668.8" cy="349.4" r="2.7" stroke="#262626" stroke-width="0.5" fill="#fff"/>
<text x="668.8" y="350.4" font-size="2.8" fill="#222" stroke="#222" stroke-width="0.14" text-anchor="middle">4</text>
<path d="M670.9 347.6L675.4 344.0" stroke="#262626" stroke-width="0.5" fill="none"/>
<path d="M675.4 344.0L677.3 345.5L677.3 349.3L682.5 349.3L682.5 377.0" stroke="#262626" stroke-width="0.5" fill="none"/>
<path d="M672.0 345.8H768.0" stroke="#555" stroke-width="0.52"/>
<path d="M672.0 347.4H768.0" stroke="#555" stroke-width="0.52"/>
<path d="M675.3 344.0L675.3 377.0" stroke="#1c1c1c" stroke-width="0.52" fill="none"/>
<rect x="612.2" y="377.0" width="14.8" height="10.7" stroke="#1c1c1c" stroke-width="0.62" fill="none"/>
<path d="M613.4 360.0V377.0" stroke="#0a0a0a" stroke-width="0.52"/>
<text x="613.1" y="375.5" font-size="2.1" fill="#000" stroke="#000" stroke-width="0.22" font-weight="bold" transform="rotate(-90 613.1 375.5)" textLength="14.5" lengthAdjust="spacingAndGlyphs">0.85 R/W B</text>
<path d="M615.2 360.0V377.0" stroke="#0a0a0a" stroke-width="0.52"/>
<text x="615.0" y="375.5" font-size="2.1" fill="#000" stroke="#000" stroke-width="0.22" font-weight="bold" transform="rotate(-90 615.0 375.5)" textLength="14.5" lengthAdjust="spacingAndGlyphs">0.85 R/W B</text>
<path d="M617.2 360.0V377.0" stroke="#0a0a0a" stroke-width="0.52"/>
<text x="617.0" y="375.5" font-size="2.1" fill="#000" stroke="#000" stroke-width="0.22" font-weight="bold" transform="rotate(-90 617.0 375.5)" textLength="14.5" lengthAdjust="spacingAndGlyphs">0.85 R/W B</text>
<path d="M620.0 360.0V377.0" stroke="#0a0a0a" stroke-width="0.52"/>
<text x="619.8" y="375.5" font-size="2.1" fill="#000" stroke="#000" stroke-width="0.22" font-weight="bold" transform="rotate(-90 619.8 375.5)" textLength="14.5" lengthAdjust="spacingAndGlyphs">0.85 R/W B</text>
<path d="M623.2 360.0V377.0" stroke="#0a0a0a" stroke-width="0.52"/>
<text x="623.0" y="375.5" font-size="2.1" fill="#000" stroke="#000" stroke-width="0.22" font-weight="bold" transform="rotate(-90 623.0 375.5)" textLength="14.5" lengthAdjust="spacingAndGlyphs">0.85 R/W B</text>
<text x="614.8" y="389.8" font-size="2.4" fill="#222" stroke="#222" stroke-width="0.14">Ry (Horn)</text>
<text x="608.8" y="377.5" font-size="2.3" fill="#222" stroke="#222" stroke-width="0.14" transform="rotate(-90 608.8 377.5)">Ry box</text>
<text x="611.0" y="377.5" font-size="2.3" fill="#222" stroke="#222" stroke-width="0.14" transform="rotate(-90 611.0 377.5)">6P</text>
<rect x="613.5" y="378.8" width="5.5" height="7.2" stroke="#1c1c1c" stroke-width="0.52" fill="none"/>
<path d="M620.5 380.0L622.5 380.0L622.5 385.0L624.5 385.0" stroke="#0a0a0a" stroke-width="0.62" fill="none"/>
<path d="M614.5 380.0L616.0 383.0L617.5 380.0" stroke="#0a0a0a" stroke-width="0.5" fill="none"/>
<path d="M623.2 360.0L623.2 359.0L640.2 359.0" stroke="#1c1c1c" stroke-width="0.52" fill="none"/>
<rect x="633.6" y="377.0" width="8.1" height="10.7" stroke="#1c1c1c" stroke-width="0.62" fill="none"/>
<path d="M634.9 360.0V377.0" stroke="#0a0a0a" stroke-width="0.52"/>
<text x="634.6" y="375.5" font-size="2.1" fill="#000" stroke="#000" stroke-width="0.22" font-weight="bold" transform="rotate(-90 634.6 375.5)" textLength="14.5" lengthAdjust="spacingAndGlyphs">0.85 R/W B</text>
<path d="M637.6 360.0V377.0" stroke="#0a0a0a" stroke-width="0.52"/>
<text x="637.4" y="375.5" font-size="2.1" fill="#000" stroke="#000" stroke-width="0.22" font-weight="bold" transform="rotate(-90 637.4 375.5)" textLength="14.5" lengthAdjust="spacingAndGlyphs">0.85 R/W B</text>
<path d="M640.2 360.0V377.0" stroke="#0a0a0a" stroke-width="0.52"/>
<text x="640.0" y="375.5" font-size="2.1" fill="#000" stroke="#000" stroke-width="0.22" font-weight="bold" transform="rotate(-90 640.0 375.5)" textLength="14.5" lengthAdjust="spacingAndGlyphs">0.85 R/W B</text>
<text x="630.5" y="389.8" font-size="2.4" fill="#222" stroke="#222" stroke-width="0.14">Wiper/Light SW</text>
<text x="631.5" y="377.5" font-size="2.3" fill="#222" stroke="#222" stroke-width="0.14" transform="rotate(-90 631.5 377.5)">Ry box</text>
<text x="633.7" y="377.5" font-size="2.3" fill="#222" stroke="#222" stroke-width="0.14" transform="rotate(-90 633.7 377.5)">6P</text>
<path d="M636.0 379.0L636.0 384.5L639.5 384.5L639.5 379.0" stroke="#1c1c1c" stroke-width="0.52" fill="none"/>
<path d="M635.8 360.0L635.8 355.7L654.7 355.7" stroke="#1c1c1c" stroke-width="0.52" fill="none"/>
<path d="M640.2 360.0L640.2 357.5L668.4 357.5L668.4 360.0" stroke="#1c1c1c" stroke-width="0.52" fill="none"/>
<rect x="649.3" y="377.0" width="13.4" height="10.7" stroke="#1c1c1c" stroke-width="0.62" fill="none"/>
<path d="M650.4 360.0V377.0" stroke="#0a0a0a" stroke-width="0.52"/>
<text x="650.1" y="375.5" font-size="2.1" fill="#000" stroke="#000" stroke-width="0.22" font-weight="bold" transform="rotate(-90 650.1 375.5)" textLength="14.5" lengthAdjust="spacingAndGlyphs">0.85 R/W B</text>
<path d="M654.7 360.0V377.0" stroke="#0a0a0a" stroke-width="0.52"/>
<text x="654.5" y="375.5" font-size="2.1" fill="#000" stroke="#000" stroke-width="0.22" font-weight="bold" transform="rotate(-90 654.5 375.5)" textLength="14.5" lengthAdjust="spacingAndGlyphs">0.85 R/W B</text>
<path d="M656.6 360.0V377.0" stroke="#0a0a0a" stroke-width="0.52"/>
<text x="656.4" y="375.5" font-size="2.1" fill="#000" stroke="#000" stroke-width="0.22" font-weight="bold" transform="rotate(-90 656.4 375.5)" textLength="14.5" lengthAdjust="spacingAndGlyphs">0.85 R/W B</text>
<path d="M658.6 360.0V377.0" stroke="#0a0a0a" stroke-width="0.52"/>
<text x="658.4" y="375.5" font-size="2.1" fill="#000" stroke="#000" stroke-width="0.22" font-weight="bold" transform="rotate(-90 658.4 375.5)" textLength="14.5" lengthAdjust="spacingAndGlyphs">0.85 R/W B</text>
<path d="M661.5 360.0V377.0" stroke="#0a0a0a" stroke-width="0.52"/>
<text x="661.2" y="375.5" font-size="2.1" fill="#000" stroke="#000" stroke-width="0.22" font-weight="bold" transform="rotate(-90 661.2 375.5)" textLength="14.5" lengthAdjust="spacingAndGlyphs">0.85 R/W B</text>
<text x="648.5" y="389.8" font-size="2.4" fill="#222" stroke="#222" stroke-width="0.14">Ry (Work Light)</text>
<text x="646.3" y="377.5" font-size="2.3" fill="#222" stroke="#222" stroke-width="0.14" transform="rotate(-90 646.3 377.5)">Ry box</text>
<text x="648.5" y="377.5" font-size="2.3" fill="#222" stroke="#222" stroke-width="0.14" transform="rotate(-90 648.5 377.5)">6P</text>
<rect x="650.5" y="378.8" width="5.5" height="7.2" stroke="#1c1c1c" stroke-width="0.52" fill="none"/>
<path d="M657.5 380.0L659.0 385.0L660.5 380.0" stroke="#0a0a0a" stroke-width="0.6" fill="none"/>
<path d="M651.5 380.0L653.0 383.0L654.5 380.0" stroke="#0a0a0a" stroke-width="0.5" fill="none"/>
<rect x="667.4" y="377.0" width="17.9" height="8.2" stroke="#1c1c1c" stroke-width="0.62" fill="none"/>
<path d="M668.4 360.0V377.0" stroke="#0a0a0a" stroke-width="0.52"/>
<text x="668.1" y="375.5" font-size="2.1" fill="#000" stroke="#000" stroke-width="0.22" font-weight="bold" transform="rotate(-90 668.1 375.5)" textLength="14.5" lengthAdjust="spacingAndGlyphs">0.85 R/W B</text>
<path d="M675.3 360.0V377.0" stroke="#0a0a0a" stroke-width="0.52"/>
<text x="675.0" y="375.5" font-size="2.1" fill="#000" stroke="#000" stroke-width="0.22" font-weight="bold" transform="rotate(-90 675.0 375.5)" textLength="14.5" lengthAdjust="spacingAndGlyphs">0.85 R/W B</text>
<path d="M682.7 360.0V377.0" stroke="#0a0a0a" stroke-width="0.52"/>
<text x="682.5" y="375.5" font-size="2.1" fill="#000" stroke="#000" stroke-width="0.22" font-weight="bold" transform="rotate(-90 682.5 375.5)" textLength="14.5" lengthAdjust="spacingAndGlyphs">0.85 R/W B</text>
<path d="M669.0 378.5L669.0 382.0L674.0 382.0L674.0 378.5" stroke="#1c1c1c" stroke-width="0.52" fill="none"/>
<path d="M677.5 378.5L677.5 382.0L683.5 382.0L683.5 378.5" stroke="#1c1c1c" stroke-width="0.52" fill="none"/>
<text x="669.0" y="387.6" font-size="2.1" fill="#333" stroke="#333" stroke-width="0.14">Pilot</text>
<text x="677.8" y="387.6" font-size="2.1" fill="#333" stroke="#333" stroke-width="0.14">Travel</text>
<text x="672.0" y="390.3" font-size="2.4" fill="#222" stroke="#222" stroke-width="0.14">Sol. Valve</text>
<text x="688.3" y="373.0" font-size="2.3" fill="#222" stroke="#222" stroke-width="0.14" transform="rotate(-90 688.3 373.0)">2P</text>
<rect x="692.7" y="377.0" width="13.8" height="10.0" stroke="#1c1c1c" stroke-width="0.62" fill="none"/>
<path d="M694.6 360.0V377.0" stroke="#0a0a0a" stroke-width="0.52"/>
<text x="694.4" y="375.5" font-size="2.1" fill="#000" stroke="#000" stroke-width="0.22" font-weight="bold" transform="rotate(-90 694.4 375.5)" textLength="14.5" lengthAdjust="spacingAndGlyphs">0.85 R/W B</text>
<path d="M696.5 360.0V377.0" stroke="#0a0a0a" stroke-width="0.52"/>
<text x="696.2" y="375.5" font-size="2.1" fill="#000" stroke="#000" stroke-width="0.22" font-weight="bold" transform="rotate(-90 696.2 375.5)" textLength="14.5" lengthAdjust="spacingAndGlyphs">0.85 R/W B</text>
<path d="M698.4 360.0V377.0" stroke="#0a0a0a" stroke-width="0.52"/>
<text x="698.1" y="375.5" font-size="2.1" fill="#000" stroke="#000" stroke-width="0.22" font-weight="bold" transform="rotate(-90 698.1 375.5)" textLength="14.5" lengthAdjust="spacingAndGlyphs">0.85 R/W B</text>
<path d="M700.9 360.0V377.0" stroke="#0a0a0a" stroke-width="0.52"/>
<text x="700.6" y="375.5" font-size="2.1" fill="#000" stroke="#000" stroke-width="0.22" font-weight="bold" transform="rotate(-90 700.6 375.5)" textLength="14.5" lengthAdjust="spacingAndGlyphs">0.85 R/W B</text>
<path d="M704.0 360.0V377.0" stroke="#0a0a0a" stroke-width="0.52"/>
<text x="703.8" y="375.5" font-size="2.1" fill="#000" stroke="#000" stroke-width="0.22" font-weight="bold" transform="rotate(-90 703.8 375.5)" textLength="14.5" lengthAdjust="spacingAndGlyphs">0.85 R/W B</text>
<text x="691.0" y="389.8" font-size="2.4" fill="#222" stroke="#222" stroke-width="0.14">Ry (Travel speed)</text>
<text x="690.3" y="377.5" font-size="2.3" fill="#222" stroke="#222" stroke-width="0.14" transform="rotate(-90 690.3 377.5)">Ry box</text>
<text x="692.5" y="377.5" font-size="2.3" fill="#222" stroke="#222" stroke-width="0.14" transform="rotate(-90 692.5 377.5)">6P</text>
<rect x="693.8" y="378.8" width="5.2" height="6.7" stroke="#1c1c1c" stroke-width="0.52" fill="none"/>
<path d="M700.5 380.0L702.0 385.0L703.5 380.0" stroke="#0a0a0a" stroke-width="0.6" fill="none"/>
<path d="M694.5 380.0L696.0 383.0L697.5 380.0" stroke="#0a0a0a" stroke-width="0.5" fill="none"/>
<path d="M695.2 353.5H768.0" stroke="#1c1c1c" stroke-width="0.5700000000000001"/>
<path d="M677.0 355.3H699.0" stroke="#1c1c1c" stroke-width="0.5700000000000001"/>
<path d="M677.0 355.3V360.0" stroke="#1c1c1c" stroke-width="0.52"/>
<path d="M704.0 360.0L704.0 357.2L716.5 357.2L716.5 361.0" stroke="#1c1c1c" stroke-width="0.5700000000000001" fill="none"/>
<rect x="711.9" y="377.0" width="15.9" height="14.4" stroke="#1c1c1c" stroke-width="0.62" fill="none"/>
<path d="M714.7 359.0V377.0" stroke="#0a0a0a" stroke-width="0.52"/>
<text x="714.5" y="375.5" font-size="2.1" fill="#000" stroke="#000" stroke-width="0.22" font-weight="bold" transform="rotate(-90 714.5 375.5)" textLength="15.5" lengthAdjust="spacingAndGlyphs">0.85 R/W B</text>
<path d="M717.8 369.5V377.0" stroke="#0a0a0a" stroke-width="0.52"/>
<text x="717.5" y="376.0" font-size="2.1" fill="#000" stroke="#000" stroke-width="0.22" font-weight="bold" transform="rotate(-90 717.5 376.0)" textLength="6" lengthAdjust="spacingAndGlyphs">0.5 B</text>
<circle cx="717.8" cy="369.3" r="0.5" stroke="#0a0a0a" stroke-width="0.3" fill="#111"/>
<path d="M720.3 369.5V377.0" stroke="#0a0a0a" stroke-width="0.52"/>
<text x="720.0" y="376.0" font-size="2.1" fill="#000" stroke="#000" stroke-width="0.22" font-weight="bold" transform="rotate(-90 720.0 376.0)" textLength="6" lengthAdjust="spacingAndGlyphs">0.5 B</text>
<circle cx="720.3" cy="369.3" r="0.5" stroke="#0a0a0a" stroke-width="0.3" fill="#111"/>
<path d="M722.8 369.5V377.0" stroke="#0a0a0a" stroke-width="0.52"/>
<text x="722.5" y="376.0" font-size="2.1" fill="#000" stroke="#000" stroke-width="0.22" font-weight="bold" transform="rotate(-90 722.5 376.0)" textLength="6" lengthAdjust="spacingAndGlyphs">0.5 B</text>
<circle cx="722.8" cy="369.3" r="0.5" stroke="#0a0a0a" stroke-width="0.3" fill="#111"/>
<path d="M716.0 388.5L716.8 381.0L718.5 381.0L718.5 388.5" stroke="#262626" stroke-width="0.5" fill="none"/>
<path d="M721.0 388.5L721.8 381.0L723.5 381.0L723.5 388.5" stroke="#262626" stroke-width="0.5" fill="none"/>
<text x="712.5" y="394.6" font-size="2.4" fill="#222" stroke="#222" stroke-width="0.14">Travel Speed SW</text>
<text x="711.5" y="397.6" font-size="2.4" fill="#222" stroke="#222" stroke-width="0.14">Hi (F) ←→ Lo (Turtle)</text>
<text x="717.5" y="400.4" font-size="2.3" fill="#222" stroke="#222" stroke-width="0.14">(Pedal)</text>
<rect x="387.2" y="411.0" width="102.2" height="41.8" stroke="#1c1c1c" stroke-width="0.62" fill="none"/>
<path d="M387.2 432.4H489.4" stroke="#1c1c1c" stroke-width="0.5700000000000001"/>
<path d="M395.5 411.0V432.4" stroke="#1c1c1c" stroke-width="0.5700000000000001"/>
<path d="M406.5 411.0V432.4" stroke="#1c1c1c" stroke-width="0.5700000000000001"/>
<path d="M421.3 411.0V432.4" stroke="#1c1c1c" stroke-width="0.5700000000000001"/>
<path d="M435.6 411.0V432.4" stroke="#1c1c1c" stroke-width="0.5700000000000001"/>
<path d="M461.8 411.0V432.4" stroke="#1c1c1c" stroke-width="0.5700000000000001"/>
<path d="M417.6 432.4V452.8" stroke="#1c1c1c" stroke-width="0.5700000000000001"/>
<path d="M428.7 432.4V452.8" stroke="#1c1c1c" stroke-width="0.5700000000000001"/>
<path d="M455.5 432.4V452.8" stroke="#1c1c1c" stroke-width="0.5700000000000001"/>
<path d="M472.0 432.4V452.8" stroke="#1c1c1c" stroke-width="0.5700000000000001"/>
<text x="391.3" y="415.0" font-size="2.3" fill="#222" stroke="#222" stroke-width="0.14" text-anchor="middle">Horn</text>
<rect x="390.0" y="417.4" width="3.6" height="7.6" stroke="#1c1c1c" stroke-width="0.47000000000000003" fill="none"/>
<path d="M390.0 421.2H393.6" stroke="#1c1c1c" stroke-width="0.47000000000000003"/>
<circle cx="391.8" cy="419.3" r="1.0800000000000067" stroke="#262626" stroke-width="0.3" fill="none"/>
<text x="391.3" y="429.4" font-size="2.3" fill="#222" stroke="#222" stroke-width="0.14" text-anchor="middle">1P(F)</text>
<text x="401.0" y="417.4" font-size="2.3" fill="#222" stroke="#222" stroke-width="0.14" text-anchor="middle">Fuel</text>
<text x="401.0" y="419.4" font-size="2.3" fill="#222" stroke="#222" stroke-width="0.14" text-anchor="middle">pump</text>
<ellipse cx="401" cy="421.6" rx="2.2" ry="1.3" stroke="#333" stroke-width="0.45" fill="none"/>
<text x="401.0" y="429.4" font-size="2.3" fill="#222" stroke="#222" stroke-width="0.14" text-anchor="middle">2P(F)</text>
<text x="413.8" y="415.8" font-size="2.3" fill="#222" stroke="#222" stroke-width="0.14" text-anchor="middle">Fly. SW</text>
<path d="M411.0 416.5H416.5" stroke="#1c1c1c" stroke-width="0.47000000000000003"/>
<rect x="409.3" y="418.4" width="8.3" height="4.9" stroke="#1c1c1c" stroke-width="0.47000000000000003" fill="none"/>
<path d="M413.5 418.4V423.3" stroke="#1c1c1c" stroke-width="0.47000000000000003"/>
<circle cx="411.4" cy="420.9" r="1.2450000000000017" stroke="#262626" stroke-width="0.3" fill="none"/>
<text x="413.8" y="429.2" font-size="2.3" fill="#222" stroke="#222" stroke-width="0.14" text-anchor="middle">2P(F)</text>
<text x="413.8" y="431.3" font-size="2.0" fill="#222" stroke="#222" stroke-width="0.14" text-anchor="middle">Sumitomo HM</text>
<text x="428.4" y="415.4" font-size="2.1" fill="#222" stroke="#222" stroke-width="0.22" font-weight="bold" text-anchor="middle">Eng. Stop Sol.</text>
<circle cx="427.5" cy="420.6" r="2.2" stroke="#262626" stroke-width="0.5" fill="none"/>
<rect x="426.0" y="419.6" width="3.0" height="2.0" stroke="#1c1c1c" stroke-width="0.47000000000000003" fill="none"/>
<text x="428.4" y="429.2" font-size="2.3" fill="#222" stroke="#222" stroke-width="0.14" text-anchor="middle">3P(M)</text>
<text x="428.4" y="431.3" font-size="2.0" fill="#222" stroke="#222" stroke-width="0.14" text-anchor="middle">Sumitomo</text>
<text x="450.6" y="414.6" font-size="2.3" fill="#222" stroke="#222" stroke-width="0.14" text-anchor="middle">Ry (Safety)</text>
<rect x="437.0" y="416.2" width="11.8" height="8.1" stroke="#1c1c1c" stroke-width="0.47000000000000003" fill="none"/>
<path d="M440.9 416.2V424.3" stroke="#1c1c1c" stroke-width="0.47000000000000003"/>
<path d="M444.9 416.2V424.3" stroke="#1c1c1c" stroke-width="0.47000000000000003"/>
<path d="M437.0 420.2H448.8" stroke="#1c1c1c" stroke-width="0.47000000000000003"/>
<circle cx="439.0" cy="418.2" r="1.180000000000001" stroke="#262626" stroke-width="0.3" fill="none"/>
<circle cx="442.9" cy="422.3" r="1.180000000000001" stroke="#262626" stroke-width="0.3" fill="none"/>
<circle cx="446.8" cy="418.2" r="1.180000000000001" stroke="#262626" stroke-width="0.3" fill="none"/>
<rect x="441.0" y="414.8" width="4.0" height="1.4" stroke="#1c1c1c" stroke-width="0.47000000000000003" fill="none"/>
<ellipse cx="455.7" cy="420.4" rx="3.2" ry="1.8" stroke="#333" stroke-width="0.5" fill="none"/>
<rect x="454.0" y="419.5" width="3.4" height="1.7" stroke="#1c1c1c" stroke-width="0.47000000000000003" fill="none"/>
<text x="443.0" y="429.2" font-size="2.3" fill="#222" stroke="#222" stroke-width="0.22" font-weight="bold" text-anchor="middle">6P(F)</text>
<text x="443.0" y="431.3" font-size="2.0" fill="#222" stroke="#222" stroke-width="0.22" font-weight="bold" text-anchor="middle">Sumitomo</text>
<text x="455.7" y="429.2" font-size="2.3" fill="#222" stroke="#222" stroke-width="0.22" font-weight="bold" text-anchor="middle">1P(F)</text>
<text x="455.7" y="431.3" font-size="2.0" fill="#222" stroke="#222" stroke-width="0.22" font-weight="bold" text-anchor="middle">Sumitomo</text>
<text x="475.5" y="414.6" font-size="2.3" fill="#222" stroke="#222" stroke-width="0.14" text-anchor="middle">Alternator</text>
<rect x="467.3" y="416.2" width="15.4" height="8.8" rx="4.4" stroke="#333" stroke-width="0.55" fill="none"/>
<rect x="469.2" y="418.0" width="11.6" height="5.3" stroke="#1c1c1c" stroke-width="0.47000000000000003" fill="none" rx="1.2"/>
<rect x="470.2" y="419.4" width="9.6" height="3.2" stroke="#0a0a0a" stroke-width="0.52" fill="none"/>
<path d="M473.4 419.4V422.6" stroke="#0a0a0a" stroke-width="0.47000000000000003"/>
<path d="M476.6 419.4V422.6" stroke="#0a0a0a" stroke-width="0.47000000000000003"/>
<circle cx="471.8" cy="421.0" r="0.9600000000000023" stroke="#0a0a0a" stroke-width="0.3" fill="none"/>
<circle cx="478.2" cy="421.0" r="0.9600000000000023" stroke="#0a0a0a" stroke-width="0.3" fill="none"/>
<text x="475.5" y="427.6" font-size="2.3" fill="#222" stroke="#222" stroke-width="0.22" font-weight="bold" text-anchor="middle">3P(F)</text>
<text x="475.5" y="429.7" font-size="2.0" fill="#222" stroke="#222" stroke-width="0.22" font-weight="bold" text-anchor="middle">Sumitomo</text>
<text x="393.6" y="435.6" font-size="2.3" fill="#222" stroke="#222" stroke-width="0.14" text-anchor="middle">Fly. SW</text>
<text x="406.0" y="437.4" font-size="2.3" fill="#222" stroke="#222" stroke-width="0.14" text-anchor="middle">Ry (Glow)</text>
<rect x="390.2" y="437.0" width="6.8" height="4.2" stroke="#1c1c1c" stroke-width="0.47000000000000003" fill="none" rx="1"/>
<rect x="391.0" y="439.5" width="5.4" height="4.7" stroke="#1c1c1c" stroke-width="0.47000000000000003" fill="none"/>
<path d="M393.7 439.5V444.2" stroke="#1c1c1c" stroke-width="0.47000000000000003"/>
<circle cx="392.4" cy="441.9" r="0.8099999999999966" stroke="#262626" stroke-width="0.3" fill="none"/>
<rect x="401.4" y="440.0" width="4.7" height="4.2" stroke="#1c1c1c" stroke-width="0.47000000000000003" fill="none"/>
<path d="M403.8 440.0V444.2" stroke="#1c1c1c" stroke-width="0.47000000000000003"/>
<circle cx="402.6" cy="442.1" r="0.7050000000000068" stroke="#262626" stroke-width="0.3" fill="none"/>
<rect x="402.6" y="438.8" width="2.3" height="1.2" stroke="#1c1c1c" stroke-width="0.47000000000000003" fill="none"/>
<rect x="410.2" y="440.0" width="4.8" height="4.2" stroke="#1c1c1c" stroke-width="0.47000000000000003" fill="none"/>
<path d="M412.6 440.0V444.2" stroke="#1c1c1c" stroke-width="0.47000000000000003"/>
<circle cx="411.4" cy="442.1" r="0.7200000000000016" stroke="#262626" stroke-width="0.3" fill="none"/>
<rect x="411.4" y="438.8" width="2.3" height="1.2" stroke="#1c1c1c" stroke-width="0.47000000000000003" fill="none"/>
<text x="393.6" y="448.8" font-size="2.1" fill="#222" stroke="#222" stroke-width="0.22" font-weight="bold" text-anchor="middle">2P(F)</text>
<text x="393.6" y="450.9" font-size="1.9" fill="#222" stroke="#222" stroke-width="0.22" font-weight="bold" text-anchor="middle">Sumitomo</text>
<text x="403.8" y="448.8" font-size="2.1" fill="#222" stroke="#222" stroke-width="0.22" font-weight="bold" text-anchor="middle">2P(F)</text>
<text x="403.8" y="450.9" font-size="1.9" fill="#222" stroke="#222" stroke-width="0.22" font-weight="bold" text-anchor="middle">Sumitomo</text>
<text x="412.6" y="448.8" font-size="2.1" fill="#222" stroke="#222" stroke-width="0.22" font-weight="bold" text-anchor="middle">2P(F)</text>
<text x="412.6" y="450.9" font-size="1.9" fill="#222" stroke="#222" stroke-width="0.22" font-weight="bold" text-anchor="middle">Sumitomo</text>
<text x="423.2" y="435.4" font-size="2.3" fill="#222" stroke="#222" stroke-width="0.22" font-weight="bold" text-anchor="middle">Timer</text>
<rect x="419.4" y="436.8" width="8.1" height="7.4" stroke="#1c1c1c" stroke-width="0.47000000000000003" fill="none"/>
<path d="M422.1 436.8V444.2" stroke="#1c1c1c" stroke-width="0.47000000000000003"/>
<path d="M424.8 436.8V444.2" stroke="#1c1c1c" stroke-width="0.47000000000000003"/>
<path d="M419.4 440.5H427.5" stroke="#1c1c1c" stroke-width="0.47000000000000003"/>
<circle cx="420.8" cy="438.6" r="0.8100000000000023" stroke="#262626" stroke-width="0.3" fill="none"/>
<circle cx="423.4" cy="442.4" r="0.8100000000000023" stroke="#262626" stroke-width="0.3" fill="none"/>
<circle cx="426.1" cy="438.6" r="0.8100000000000023" stroke="#262626" stroke-width="0.3" fill="none"/>
<text x="423.2" y="448.8" font-size="2.1" fill="#222" stroke="#222" stroke-width="0.22" font-weight="bold" text-anchor="middle">6P(F)</text>
<text x="423.2" y="450.9" font-size="1.9" fill="#222" stroke="#222" stroke-width="0.22" font-weight="bold" text-anchor="middle">Sumitomo</text>
<text x="442.0" y="434.8" font-size="2.2" fill="#222" stroke="#222" stroke-width="0.22" font-weight="bold" text-anchor="middle">Ry Box-1</text>
<rect x="430.0" y="436.8" width="24.0" height="8.9" stroke="#1c1c1c" stroke-width="0.62" fill="none" rx="1.5"/>
<rect x="431.2" y="437.8" width="21.6" height="6.9" stroke="#1c1c1c" stroke-width="0.47000000000000003" fill="none"/>
<path d="M434.3 437.8V444.7" stroke="#1c1c1c" stroke-width="0.47000000000000003"/>
<path d="M437.4 437.8V444.7" stroke="#1c1c1c" stroke-width="0.47000000000000003"/>
<path d="M440.5 437.8V444.7" stroke="#1c1c1c" stroke-width="0.47000000000000003"/>
<path d="M443.5 437.8V444.7" stroke="#1c1c1c" stroke-width="0.47000000000000003"/>
<path d="M446.6 437.8V444.7" stroke="#1c1c1c" stroke-width="0.47000000000000003"/>
<path d="M449.7 437.8V444.7" stroke="#1c1c1c" stroke-width="0.47000000000000003"/>
<path d="M431.2 441.2H452.8" stroke="#1c1c1c" stroke-width="0.47000000000000003"/>
<circle cx="432.7" cy="439.5" r="0.9257142857142866" stroke="#262626" stroke-width="0.3" fill="none"/>
<circle cx="435.8" cy="443.0" r="0.9257142857142866" stroke="#262626" stroke-width="0.3" fill="none"/>
<circle cx="438.9" cy="439.5" r="0.9257142857142866" stroke="#262626" stroke-width="0.3" fill="none"/>
<circle cx="442.0" cy="443.0" r="0.9257142857142866" stroke="#262626" stroke-width="0.3" fill="none"/>
<circle cx="445.1" cy="439.5" r="0.9257142857142866" stroke="#262626" stroke-width="0.3" fill="none"/>
<circle cx="448.2" cy="443.0" r="0.9257142857142866" stroke="#262626" stroke-width="0.3" fill="none"/>
<circle cx="451.3" cy="439.5" r="0.9257142857142866" stroke="#262626" stroke-width="0.3" fill="none"/>
<text x="442.0" y="449.0" font-size="2.2" fill="#222" stroke="#222" stroke-width="0.22" font-weight="bold" text-anchor="middle">14P</text>
<text x="442.0" y="451.2" font-size="2.1" fill="#222" stroke="#222" stroke-width="0.14" text-anchor="middle">(Female)</text>
<text x="463.8" y="435.0" font-size="2.0" fill="#222" stroke="#222" stroke-width="0.22" font-weight="bold" text-anchor="middle">Safety Relay Assy</text>
<rect x="458.4" y="437.6" width="11.1" height="7.4" stroke="#0a0a0a" stroke-width="0.9" fill="none" rx="1"/>
<rect x="460.0" y="439.0" width="3.4" height="4.6" stroke="#0a0a0a" stroke-width="0.72" fill="none"/>
<rect x="464.6" y="439.0" width="3.4" height="4.6" stroke="#0a0a0a" stroke-width="0.72" fill="none"/>
<circle cx="461.7" cy="441.3" r="0.7" stroke="#0a0a0a" stroke-width="0.4" fill="#111"/>
<circle cx="466.3" cy="441.3" r="0.7" stroke="#0a0a0a" stroke-width="0.4" fill="#111"/>
<text x="463.8" y="448.8" font-size="2.1" fill="#222" stroke="#222" stroke-width="0.22" font-weight="bold" text-anchor="middle">2P(F)</text>
<text x="463.8" y="450.9" font-size="1.9" fill="#222" stroke="#222" stroke-width="0.22" font-weight="bold" text-anchor="middle">Sumitomo</text>
<text x="480.8" y="435.0" font-size="1.9" fill="#222" stroke="#222" stroke-width="0.22" font-weight="bold" text-anchor="middle">Eng. Oil Press. SW</text>
<circle cx="479.8" cy="441.7" r="4.6" stroke="#262626" stroke-width="0.55" fill="none"/>
<rect x="477.8" y="437.8" width="4.0" height="7.8" stroke="#1c1c1c" stroke-width="0.52" fill="none" rx="1"/>
<circle cx="479.8" cy="439.8" r="0.9" stroke="#262626" stroke-width="0.4" fill="none"/>
<circle cx="479.8" cy="443.4" r="0.9" stroke="#262626" stroke-width="0.4" fill="none"/>
<text x="480.8" y="448.8" font-size="2.1" fill="#222" stroke="#222" stroke-width="0.22" font-weight="bold" text-anchor="middle">1P(F)</text>
<text x="480.8" y="450.9" font-size="1.9" fill="#222" stroke="#222" stroke-width="0.22" font-weight="bold" text-anchor="middle">Sumitomo</text>
<rect x="584.1" y="411.0" width="129.7" height="43.8" stroke="#1c1c1c" stroke-width="0.62" fill="none"/>
<path d="M584.1 433.2H654.8" stroke="#1c1c1c" stroke-width="0.5700000000000001"/>
<path d="M612.5 411.0V433.2" stroke="#1c1c1c" stroke-width="0.5700000000000001"/>
<path d="M626.8 411.0V433.2" stroke="#1c1c1c" stroke-width="0.5700000000000001"/>
<path d="M639.7 411.0V433.2" stroke="#1c1c1c" stroke-width="0.5700000000000001"/>
<path d="M654.8 411.0V433.2" stroke="#1c1c1c" stroke-width="0.5700000000000001"/>
<path d="M595.2 433.2V454.8" stroke="#1c1c1c" stroke-width="0.5700000000000001"/>
<path d="M608.4 433.2V454.8" stroke="#1c1c1c" stroke-width="0.5700000000000001"/>
<path d="M621.4 433.2V454.8" stroke="#1c1c1c" stroke-width="0.5700000000000001"/>
<path d="M639.7 433.2V454.8" stroke="#1c1c1c" stroke-width="0.5700000000000001"/>
<path d="M654.8 433.2V454.8" stroke="#1c1c1c" stroke-width="0.5700000000000001"/>
<text x="598.3" y="413.6" font-size="2.3" fill="#222" stroke="#222" stroke-width="0.14" text-anchor="middle">Ry Box-2</text>
<text x="598.3" y="415.8" font-size="2.0" fill="#222" stroke="#222" stroke-width="0.14" text-anchor="middle">14P</text>
<rect x="586.3" y="417.4" width="24.3" height="8.8" stroke="#1c1c1c" stroke-width="0.62" fill="none" rx="1.8"/>
<rect x="587.4" y="418.4" width="22.1" height="6.8" stroke="#1c1c1c" stroke-width="0.47000000000000003" fill="none"/>
<path d="M590.6 418.4V425.2" stroke="#1c1c1c" stroke-width="0.47000000000000003"/>
<path d="M593.7 418.4V425.2" stroke="#1c1c1c" stroke-width="0.47000000000000003"/>
<path d="M596.9 418.4V425.2" stroke="#1c1c1c" stroke-width="0.47000000000000003"/>
<path d="M600.0 418.4V425.2" stroke="#1c1c1c" stroke-width="0.47000000000000003"/>
<path d="M603.2 418.4V425.2" stroke="#1c1c1c" stroke-width="0.47000000000000003"/>
<path d="M606.3 418.4V425.2" stroke="#1c1c1c" stroke-width="0.47000000000000003"/>
<path d="M587.4 421.8H609.5" stroke="#1c1c1c" stroke-width="0.47000000000000003"/>
<circle cx="589.0" cy="420.1" r="0.9471428571428582" stroke="#262626" stroke-width="0.3" fill="none"/>
<circle cx="592.1" cy="423.5" r="0.9471428571428582" stroke="#262626" stroke-width="0.3" fill="none"/>
<circle cx="595.3" cy="420.1" r="0.9471428571428582" stroke="#262626" stroke-width="0.3" fill="none"/>
<circle cx="598.5" cy="423.5" r="0.9471428571428582" stroke="#262626" stroke-width="0.3" fill="none"/>
<circle cx="601.6" cy="420.1" r="0.9471428571428582" stroke="#262626" stroke-width="0.3" fill="none"/>
<circle cx="604.8" cy="423.5" r="0.9471428571428582" stroke="#262626" stroke-width="0.3" fill="none"/>
<circle cx="607.9" cy="420.1" r="0.9471428571428582" stroke="#262626" stroke-width="0.3" fill="none"/>
<text x="598.3" y="430.0" font-size="2.2" fill="#222" stroke="#222" stroke-width="0.22" font-weight="bold" text-anchor="middle">14P</text>
<text x="598.3" y="432.2" font-size="2.1" fill="#222" stroke="#222" stroke-width="0.14" text-anchor="middle">(Female)</text>
<text x="619.6" y="416.6" font-size="2.3" fill="#222" stroke="#222" stroke-width="0.14" text-anchor="middle">Horn</text>
<rect x="613.6" y="418.0" width="11.8" height="5.3" stroke="#1c1c1c" stroke-width="0.47000000000000003" fill="none"/>
<path d="M616.0 418.0V423.3" stroke="#1c1c1c" stroke-width="0.47000000000000003"/>
<path d="M618.3 418.0V423.3" stroke="#1c1c1c" stroke-width="0.47000000000000003"/>
<path d="M620.7 418.0V423.3" stroke="#1c1c1c" stroke-width="0.47000000000000003"/>
<path d="M623.0 418.0V423.3" stroke="#1c1c1c" stroke-width="0.47000000000000003"/>
<circle cx="614.8" cy="420.6" r="0.7079999999999973" stroke="#262626" stroke-width="0.3" fill="none"/>
<circle cx="619.5" cy="420.6" r="0.7079999999999973" stroke="#262626" stroke-width="0.3" fill="none"/>
<circle cx="624.2" cy="420.6" r="0.7079999999999973" stroke="#262626" stroke-width="0.3" fill="none"/>
<rect x="617.6" y="419.0" width="3.8" height="3.4" stroke="#0a0a0a" stroke-width="0.52" fill="none"/>
<text x="619.6" y="429.6" font-size="2.1" fill="#222" stroke="#222" stroke-width="0.22" font-weight="bold" text-anchor="middle">2P(F)</text>
<text x="619.6" y="431.8" font-size="1.9" fill="#222" stroke="#222" stroke-width="0.22" font-weight="bold" text-anchor="middle">Sumitomo</text>
<text x="633.3" y="415.4" font-size="2.1" fill="#222" stroke="#222" stroke-width="0.14" text-anchor="middle">Ry (Glow)</text>
<rect x="628.7" y="418.4" width="9.2" height="3.0" stroke="#1c1c1c" stroke-width="0.52" fill="none"/>
<rect x="631.7" y="421.4" width="3.2" height="4.4" stroke="#1c1c1c" stroke-width="0.52" fill="none"/>
<rect x="629.9" y="419.0" width="6.8" height="1.9" stroke="#1c1c1c" stroke-width="0.47000000000000003" fill="none"/>
<path d="M632.2 419.0V420.9" stroke="#1c1c1c" stroke-width="0.47000000000000003"/>
<path d="M634.4 419.0V420.9" stroke="#1c1c1c" stroke-width="0.47000000000000003"/>
<circle cx="631.0" cy="419.9" r="0.5699999999999932" stroke="#262626" stroke-width="0.3" fill="none"/>
<circle cx="635.6" cy="419.9" r="0.5699999999999932" stroke="#262626" stroke-width="0.3" fill="none"/>
<text x="633.3" y="429.6" font-size="2.1" fill="#222" stroke="#222" stroke-width="0.22" font-weight="bold" text-anchor="middle">4P(F)</text>
<text x="633.3" y="431.8" font-size="1.9" fill="#222" stroke="#222" stroke-width="0.22" font-weight="bold" text-anchor="middle">Sumitomo</text>
<text x="647.2" y="415.4" font-size="2.1" fill="#222" stroke="#222" stroke-width="0.22" font-weight="bold" text-anchor="middle">Safety SW</text>
<rect x="642.6" y="418.4" width="9.2" height="3.0" stroke="#1c1c1c" stroke-width="0.52" fill="none"/>
<rect x="645.6" y="421.4" width="3.2" height="4.4" stroke="#1c1c1c" stroke-width="0.52" fill="none"/>
<rect x="643.8" y="419.0" width="6.8" height="1.9" stroke="#1c1c1c" stroke-width="0.47000000000000003" fill="none"/>
<path d="M646.1 419.0V420.9" stroke="#1c1c1c" stroke-width="0.47000000000000003"/>
<path d="M648.3 419.0V420.9" stroke="#1c1c1c" stroke-width="0.47000000000000003"/>
<circle cx="644.9" cy="419.9" r="0.5699999999999932" stroke="#262626" stroke-width="0.3" fill="none"/>
<circle cx="649.5" cy="419.9" r="0.5699999999999932" stroke="#262626" stroke-width="0.3" fill="none"/>
<text x="647.2" y="429.6" font-size="2.1" fill="#222" stroke="#222" stroke-width="0.22" font-weight="bold" text-anchor="middle">4P(F)</text>
<text x="647.2" y="431.8" font-size="1.9" fill="#222" stroke="#222" stroke-width="0.22" font-weight="bold" text-anchor="middle">Sumitomo</text>
<text x="647.2" y="413.3" font-size="2.0" fill="#222" stroke="#222" stroke-width="0.22" font-weight="bold" text-anchor="middle">Pilot shut off</text>
<text x="589.6" y="436.0" font-size="2.3" fill="#222" stroke="#222" stroke-width="0.14" text-anchor="middle">Light</text>
<rect x="586.0" y="438.6" width="8.0" height="7.8" stroke="#1c1c1c" stroke-width="0.47000000000000003" fill="none"/>
<path d="M590.0 438.6V446.4" stroke="#1c1c1c" stroke-width="0.47000000000000003"/>
<path d="M586.0 442.5H594.0" stroke="#1c1c1c" stroke-width="0.47000000000000003"/>
<circle cx="588.0" cy="440.6" r="1.169999999999993" stroke="#262626" stroke-width="0.3" fill="none"/>
<circle cx="592.0" cy="444.4" r="1.169999999999993" stroke="#262626" stroke-width="0.3" fill="none"/>
<path d="M590.0 437.4V438.6" stroke="#1c1c1c" stroke-width="0.47000000000000003"/>
<text x="589.6" y="450.6" font-size="2.0" fill="#222" stroke="#222" stroke-width="0.22" font-weight="bold" text-anchor="middle">4P(F)</text>
<text x="589.6" y="452.8" font-size="1.8" fill="#222" stroke="#222" stroke-width="0.22" font-weight="bold" text-anchor="middle">Sumitomo</text>
<text x="601.8" y="436.0" font-size="2.0" fill="#222" stroke="#222" stroke-width="0.22" font-weight="bold" text-anchor="middle">Wiper Motor</text>
<rect x="598.8" y="438.0" width="5.9" height="9.5" stroke="#0a0a0a" stroke-width="0.9" fill="none"/>
<rect x="600.2" y="439.2" width="3.1" height="3.2" stroke="#0a0a0a" stroke-width="0.62" fill="none"/>
<path d="M601.7 442.4V446.5" stroke="#0a0a0a" stroke-width="0.8"/>
<text x="601.8" y="450.6" font-size="2.0" fill="#222" stroke="#222" stroke-width="0.22" font-weight="bold" text-anchor="middle">3P</text>
<text x="601.8" y="452.8" font-size="1.9" fill="#222" stroke="#222" stroke-width="0.14" text-anchor="middle">(Female)</text>
<text x="614.9" y="438.2" font-size="2.3" fill="#222" stroke="#222" stroke-width="0.14" text-anchor="middle">Washer</text>
<text x="614.9" y="440.2" font-size="2.3" fill="#222" stroke="#222" stroke-width="0.14" text-anchor="middle">pump</text>
<ellipse cx="614.9" cy="442.8" rx="3" ry="1.7" stroke="#333" stroke-width="0.45" fill="none"/>
<text x="614.9" y="451.0" font-size="2.0" fill="#222" stroke="#222" stroke-width="0.22" font-weight="bold" text-anchor="middle">2P(F)</text>
<text x="630.5" y="436.0" font-size="2.3" fill="#222" stroke="#222" stroke-width="0.14" text-anchor="middle">Light</text>
<rect x="623.9" y="438.6" width="12.5" height="7.4" stroke="#1c1c1c" stroke-width="0.47000000000000003" fill="none"/>
<path d="M627.0 438.6V446.0" stroke="#1c1c1c" stroke-width="0.47000000000000003"/>
<path d="M630.1 438.6V446.0" stroke="#1c1c1c" stroke-width="0.47000000000000003"/>
<path d="M633.3 438.6V446.0" stroke="#1c1c1c" stroke-width="0.47000000000000003"/>
<path d="M623.9 442.3H636.4" stroke="#1c1c1c" stroke-width="0.47000000000000003"/>
<circle cx="625.5" cy="440.5" r="0.9375" stroke="#262626" stroke-width="0.3" fill="none"/>
<circle cx="628.6" cy="444.1" r="0.9375" stroke="#262626" stroke-width="0.3" fill="none"/>
<circle cx="631.7" cy="440.5" r="0.9375" stroke="#262626" stroke-width="0.3" fill="none"/>
<circle cx="634.8" cy="444.1" r="0.9375" stroke="#262626" stroke-width="0.3" fill="none"/>
<rect x="628.4" y="437.4" width="3.4" height="1.2" stroke="#1c1c1c" stroke-width="0.47000000000000003" fill="none"/>
<text x="630.5" y="450.6" font-size="2.0" fill="#222" stroke="#222" stroke-width="0.22" font-weight="bold" text-anchor="middle">8P(F)</text>
<text x="630.5" y="452.8" font-size="1.9" fill="#222" stroke="#222" stroke-width="0.22" font-weight="bold" text-anchor="middle">Sumitomo</text>
<text x="647.2" y="434.6" font-size="2.0" fill="#222" stroke="#222" stroke-width="0.22" font-weight="bold" text-anchor="middle">Travel Speed</text>
<text x="647.2" y="436.6" font-size="2.0" fill="#222" stroke="#222" stroke-width="0.22" font-weight="bold" text-anchor="middle">SW</text>
<rect x="642.0" y="438.6" width="10.6" height="8.3" stroke="#0a0a0a" stroke-width="1.0" fill="none" rx="1"/>
<rect x="643.6" y="440.2" width="3.2" height="5.0" stroke="#0a0a0a" stroke-width="0.72" fill="none"/>
<rect x="647.8" y="440.2" width="3.2" height="5.0" stroke="#0a0a0a" stroke-width="0.72" fill="none"/>
<circle cx="645.2" cy="442.7" r="0.7" stroke="#0a0a0a" stroke-width="0.4" fill="#111"/>
<circle cx="649.4" cy="442.7" r="0.7" stroke="#0a0a0a" stroke-width="0.4" fill="#111"/>
<text x="647.2" y="450.6" font-size="2.0" fill="#222" stroke="#222" stroke-width="0.22" font-weight="bold" text-anchor="middle">2P(F)</text>
<text x="647.2" y="452.8" font-size="1.9" fill="#222" stroke="#222" stroke-width="0.22" font-weight="bold" text-anchor="middle">Sumitomo</text>
<text x="684.0" y="413.6" font-size="2.3" fill="#222" stroke="#222" stroke-width="0.14" text-anchor="middle">Monitor-1</text>
<text x="684.0" y="415.8" font-size="2.0" fill="#222" stroke="#222" stroke-width="0.14" text-anchor="middle">16P</text>
<rect x="660.2" y="417.5" width="47.0" height="7.5" stroke="#1c1c1c" stroke-width="0.47000000000000003" fill="none"/>
<path d="M664.1 417.5V425.0" stroke="#1c1c1c" stroke-width="0.47000000000000003"/>
<path d="M668.0 417.5V425.0" stroke="#1c1c1c" stroke-width="0.47000000000000003"/>
<path d="M672.0 417.5V425.0" stroke="#1c1c1c" stroke-width="0.47000000000000003"/>
<path d="M675.9 417.5V425.0" stroke="#1c1c1c" stroke-width="0.47000000000000003"/>
<path d="M679.8 417.5V425.0" stroke="#1c1c1c" stroke-width="0.47000000000000003"/>
<path d="M683.7 417.5V425.0" stroke="#1c1c1c" stroke-width="0.47000000000000003"/>
<path d="M687.6 417.5V425.0" stroke="#1c1c1c" stroke-width="0.47000000000000003"/>
<path d="M691.5 417.5V425.0" stroke="#1c1c1c" stroke-width="0.47000000000000003"/>
<path d="M695.5 417.5V425.0" stroke="#1c1c1c" stroke-width="0.47000000000000003"/>
<path d="M699.4 417.5V425.0" stroke="#1c1c1c" stroke-width="0.47000000000000003"/>
<path d="M703.3 417.5V425.0" stroke="#1c1c1c" stroke-width="0.47000000000000003"/>
<path d="M660.2 421.2H707.2" stroke="#1c1c1c" stroke-width="0.47000000000000003"/>
<circle cx="662.2" cy="419.4" r="1.125" stroke="#262626" stroke-width="0.3" fill="none"/>
<circle cx="666.1" cy="423.1" r="1.125" stroke="#262626" stroke-width="0.3" fill="none"/>
<circle cx="670.0" cy="419.4" r="1.125" stroke="#262626" stroke-width="0.3" fill="none"/>
<circle cx="673.9" cy="423.1" r="1.125" stroke="#262626" stroke-width="0.3" fill="none"/>
<circle cx="677.8" cy="419.4" r="1.125" stroke="#262626" stroke-width="0.3" fill="none"/>
<circle cx="681.7" cy="423.1" r="1.125" stroke="#262626" stroke-width="0.3" fill="none"/>
<circle cx="685.7" cy="419.4" r="1.125" stroke="#262626" stroke-width="0.3" fill="none"/>
<circle cx="689.6" cy="423.1" r="1.125" stroke="#262626" stroke-width="0.3" fill="none"/>
<circle cx="693.5" cy="419.4" r="1.125" stroke="#262626" stroke-width="0.3" fill="none"/>
<circle cx="697.4" cy="423.1" r="1.125" stroke="#262626" stroke-width="0.3" fill="none"/>
<circle cx="701.3" cy="419.4" r="1.125" stroke="#262626" stroke-width="0.3" fill="none"/>
<circle cx="705.2" cy="423.1" r="1.125" stroke="#262626" stroke-width="0.3" fill="none"/>
<text x="684.0" y="429.2" font-size="2.2" fill="#222" stroke="#222" stroke-width="0.22" font-weight="bold" text-anchor="middle">16P</text>
<text x="684.0" y="431.4" font-size="2.1" fill="#222" stroke="#222" stroke-width="0.14" text-anchor="middle">(Female)</text>
<text x="684.0" y="435.4" font-size="2.3" fill="#222" stroke="#222" stroke-width="0.14" text-anchor="middle">Monitor-2</text>
<text x="684.0" y="437.6" font-size="2.0" fill="#222" stroke="#222" stroke-width="0.14" text-anchor="middle">20P</text>
<rect x="656.4" y="439.3" width="55.3" height="7.6" stroke="#1c1c1c" stroke-width="0.47000000000000003" fill="none"/>
<path d="M660.7 439.3V446.9" stroke="#1c1c1c" stroke-width="0.47000000000000003"/>
<path d="M664.9 439.3V446.9" stroke="#1c1c1c" stroke-width="0.47000000000000003"/>
<path d="M669.2 439.3V446.9" stroke="#1c1c1c" stroke-width="0.47000000000000003"/>
<path d="M673.4 439.3V446.9" stroke="#1c1c1c" stroke-width="0.47000000000000003"/>
<path d="M677.7 439.3V446.9" stroke="#1c1c1c" stroke-width="0.47000000000000003"/>
<path d="M681.9 439.3V446.9" stroke="#1c1c1c" stroke-width="0.47000000000000003"/>
<path d="M686.2 439.3V446.9" stroke="#1c1c1c" stroke-width="0.47000000000000003"/>
<path d="M690.4 439.3V446.9" stroke="#1c1c1c" stroke-width="0.47000000000000003"/>
<path d="M694.7 439.3V446.9" stroke="#1c1c1c" stroke-width="0.47000000000000003"/>
<path d="M698.9 439.3V446.9" stroke="#1c1c1c" stroke-width="0.47000000000000003"/>
<path d="M703.2 439.3V446.9" stroke="#1c1c1c" stroke-width="0.47000000000000003"/>
<path d="M707.4 439.3V446.9" stroke="#1c1c1c" stroke-width="0.47000000000000003"/>
<path d="M656.4 443.1H711.7" stroke="#1c1c1c" stroke-width="0.47000000000000003"/>
<circle cx="658.5" cy="441.2" r="1.1399999999999948" stroke="#262626" stroke-width="0.3" fill="none"/>
<circle cx="662.8" cy="445.0" r="1.1399999999999948" stroke="#262626" stroke-width="0.3" fill="none"/>
<circle cx="667.0" cy="441.2" r="1.1399999999999948" stroke="#262626" stroke-width="0.3" fill="none"/>
<circle cx="671.3" cy="445.0" r="1.1399999999999948" stroke="#262626" stroke-width="0.3" fill="none"/>
<circle cx="675.5" cy="441.2" r="1.1399999999999948" stroke="#262626" stroke-width="0.3" fill="none"/>
<circle cx="679.8" cy="445.0" r="1.1399999999999948" stroke="#262626" stroke-width="0.3" fill="none"/>
<circle cx="684.0" cy="441.2" r="1.1399999999999948" stroke="#262626" stroke-width="0.3" fill="none"/>
<circle cx="688.3" cy="445.0" r="1.1399999999999948" stroke="#262626" stroke-width="0.3" fill="none"/>
<circle cx="692.6" cy="441.2" r="1.1399999999999948" stroke="#262626" stroke-width="0.3" fill="none"/>
<circle cx="696.8" cy="445.0" r="1.1399999999999948" stroke="#262626" stroke-width="0.3" fill="none"/>
<circle cx="701.1" cy="441.2" r="1.1399999999999948" stroke="#262626" stroke-width="0.3" fill="none"/>
<circle cx="705.3" cy="445.0" r="1.1399999999999948" stroke="#262626" stroke-width="0.3" fill="none"/>
<circle cx="709.6" cy="441.2" r="1.1399999999999948" stroke="#262626" stroke-width="0.3" fill="none"/>
<text x="684.0" y="450.6" font-size="2.2" fill="#222" stroke="#222" stroke-width="0.22" font-weight="bold" text-anchor="middle">20P</text>
<text x="684.0" y="452.8" font-size="2.1" fill="#222" stroke="#222" stroke-width="0.14" text-anchor="middle">(Female)</text>
<path d="M725.1 445.6L728.4 445.6L728.4 444.2L731.5 446.4L728.4 448.6L728.4 447.2L725.1 447.2L725.1 445.6" stroke="#262626" stroke-width="0.45" fill="none"/>
<rect x="733.4" y="443.9" width="5.4" height="4.7" stroke="#0a0a0a" stroke-width="0.62" fill="none"/>
<path d="M738.8 444.9H743.7" stroke="#555" stroke-width="0.47000000000000003"/>
<path d="M738.8 445.9H743.7" stroke="#555" stroke-width="0.47000000000000003"/>
<path d="M738.8 446.9H743.7" stroke="#555" stroke-width="0.47000000000000003"/>
<path d="M738.8 447.9H743.7" stroke="#555" stroke-width="0.47000000000000003"/>
<path d="M737.4 448.6L739.6 452.3L751.7 452.3" stroke="#262626" stroke-width="0.5" fill="none"/>
</svg>
</body></html>
